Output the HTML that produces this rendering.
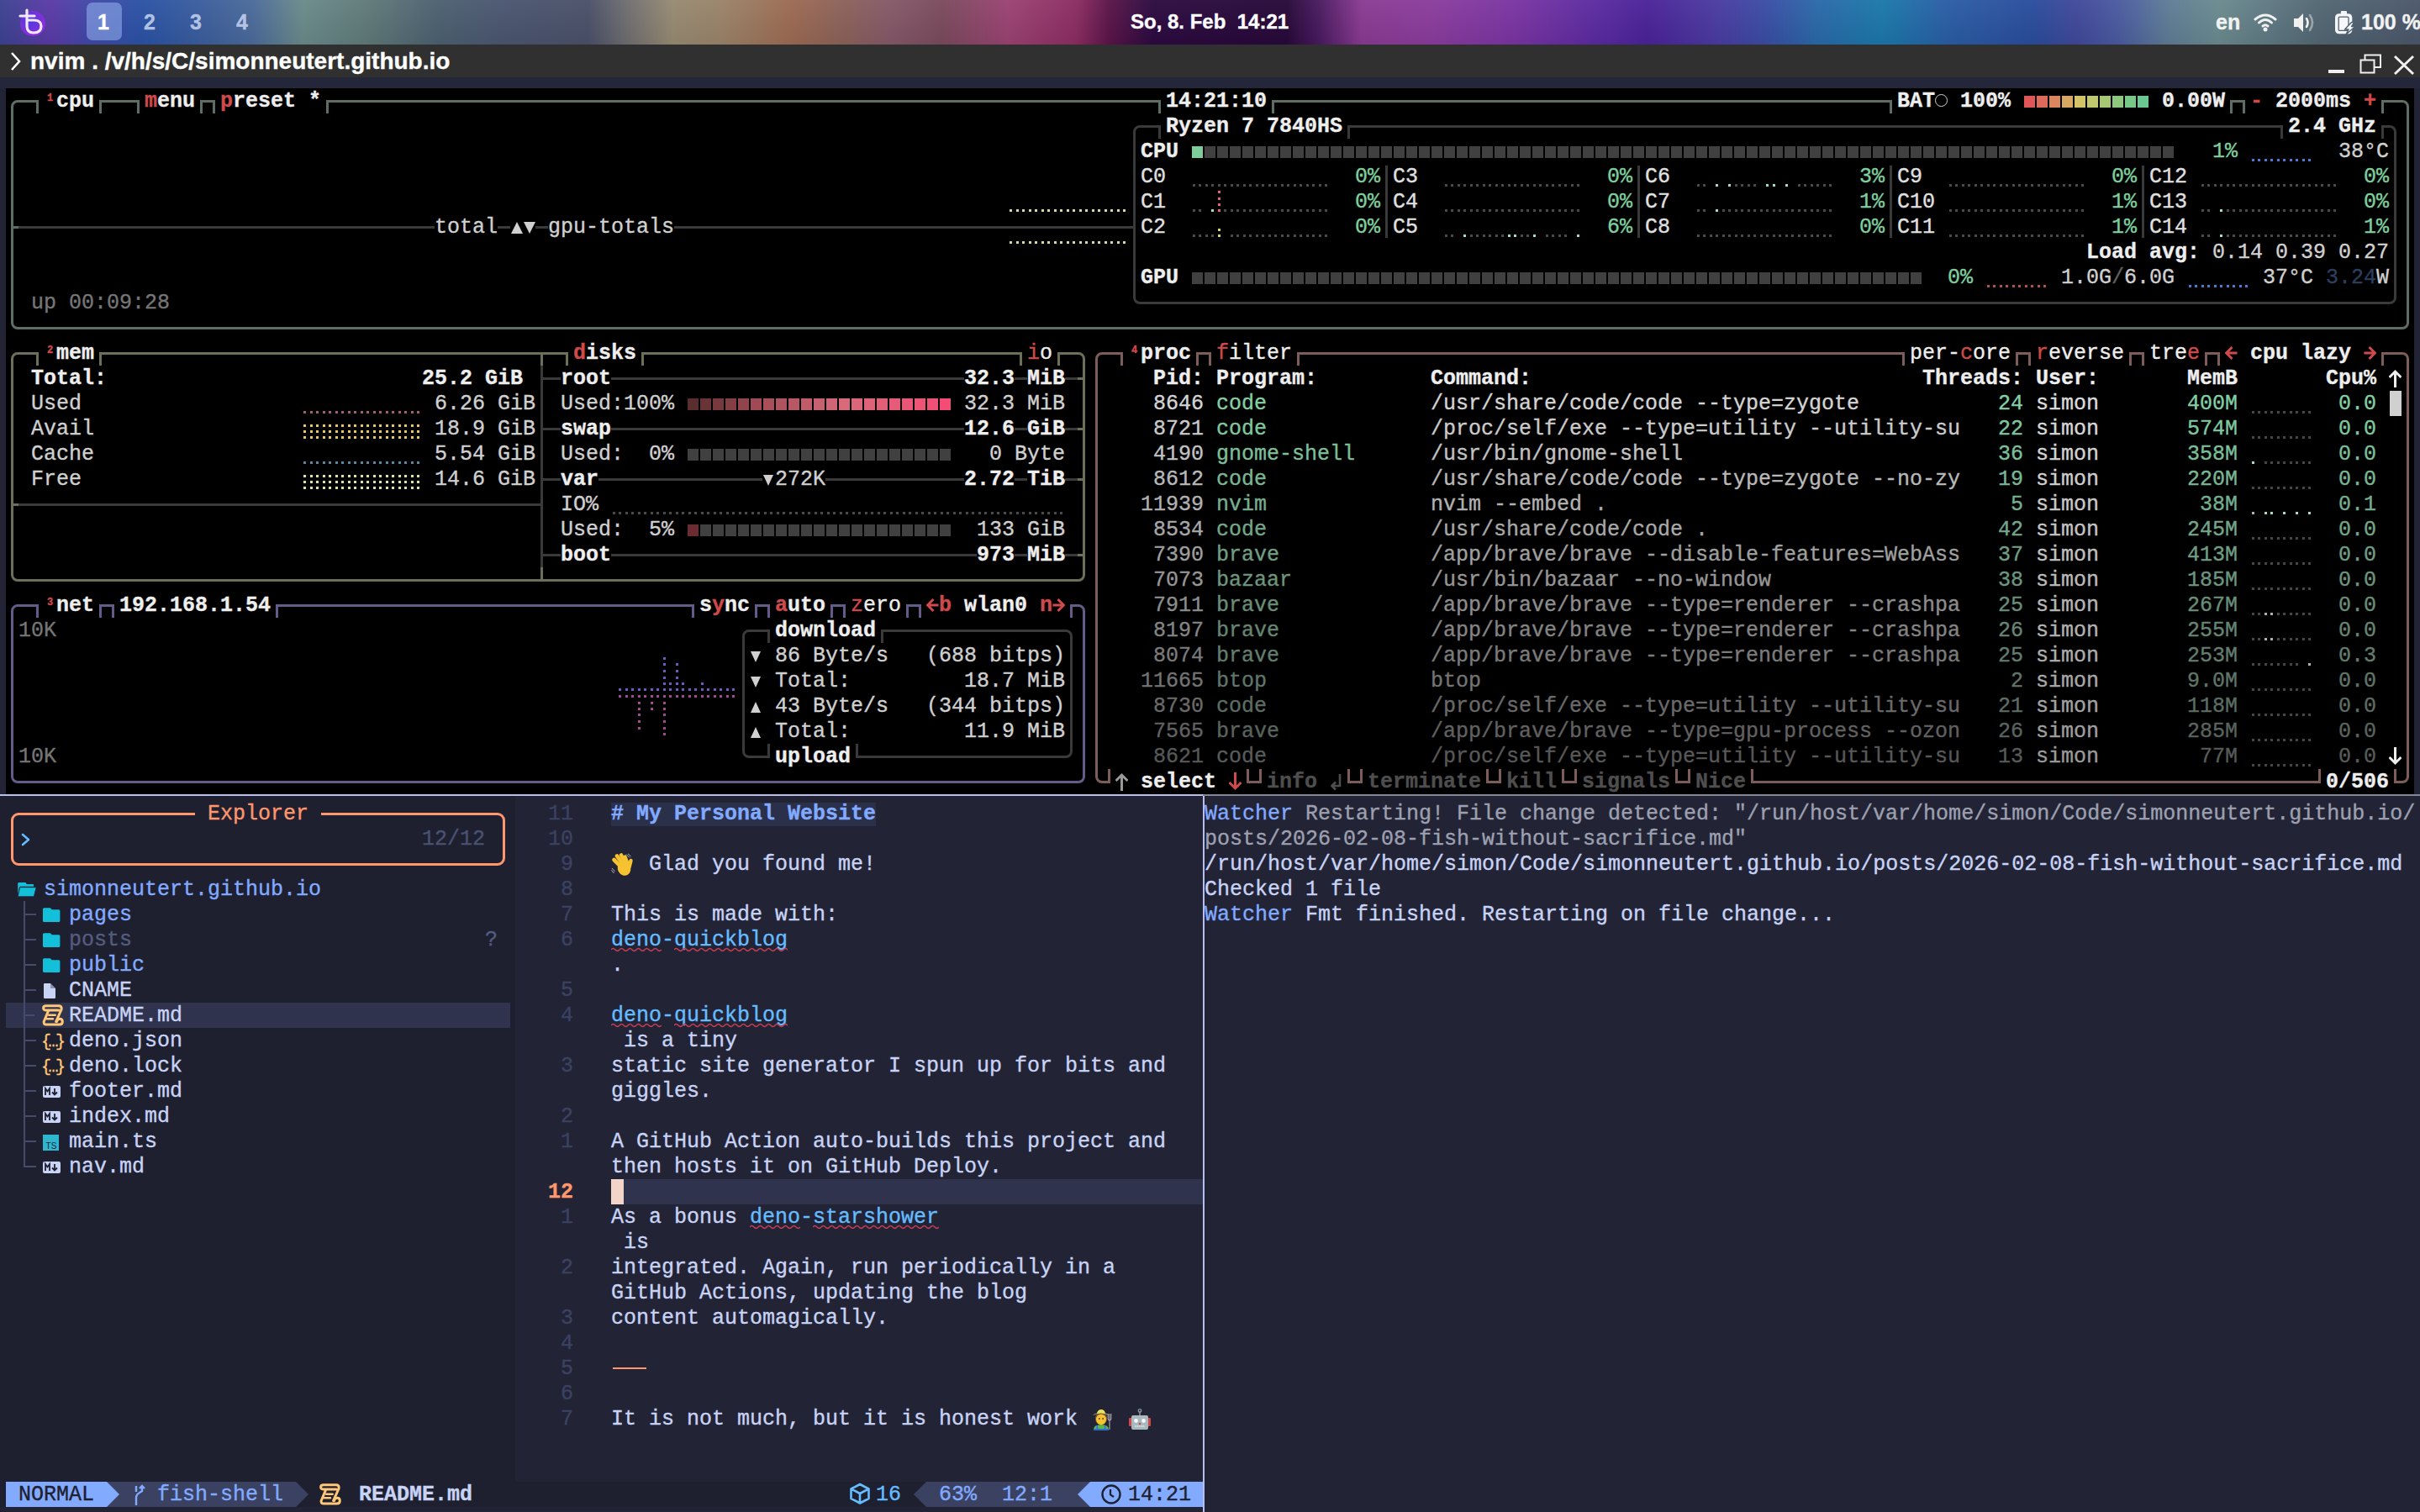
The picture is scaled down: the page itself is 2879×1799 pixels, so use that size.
<!DOCTYPE html><html><head><meta charset="utf-8"><style>

*{margin:0;padding:0}
html,body{width:2879px;height:1799px;overflow:hidden;background:#222436}
body{position:relative}
i,b{position:absolute;display:block}
i{font-style:normal;white-space:pre;-webkit-text-stroke:0.35px;font-family:"Liberation Mono",monospace;font-size:25px;line-height:30px;font-weight:normal}

</style></head><body>
<b style="left:0;top:0;width:2879px;height:53px;background:linear-gradient(90deg,#3b4290 0px,#5a3aa6 60px,#3f48a8 110px,#2a52a4 170px,#3d5f9c 250px,#4a6a9a 300px,#6a8a8a 360px,#5f7878 440px,#4c6070 520px,#4a5570 600px,#4a5068 700px,#6a6a70 740px,#968a72 800px,#9a8268 860px,#9c6a52 940px,#8c6258 1000px,#845868 1060px,#7a4a5c 1120px,#9a4272 1200px,#8c2c62 1280px,#5a1448 1320px,#2c0a40 1370px,#260838 1530px,#4a1a60 1570px,#8a3a92 1620px,#8a3c9c 1700px,#7a34a2 1800px,#5a2aa0 1900px,#4a2298 1960px,#4a3aa0 2040px,#3a4ca4 2100px,#2a68a8 2160px,#1a78aa 2240px,#2a5ca4 2320px,#2a4c9c 2420px,#40489a 2470px,#4a5aa0 2520px,#5e7c96 2580px,#6a8a8e 2640px,#5e7882 2700px,#526672 2760px,#4a566a 2879px)"></b>
<b style="left:0;top:0;width:2879px;height:53px;background:linear-gradient(180deg,rgba(255,255,255,0.04),rgba(0,0,0,0.06))"></b>
<b style="left:0;top:53px;width:2879px;height:39px;background:#303030"></b>
<b style="left:0;top:92px;width:2879px;height:13px;background:#24273a"></b>
<b style="left:7px;top:105px;width:2865px;height:840px;background:#000000"></b>
<b style="left:13px;top:119px;width:2853px;height:273px;border:3px solid #5f6e64;border-radius:8px;box-sizing:border-box"></b>
<b style="left:46px;top:118px;width:72px;height:5px;background:#000"></b>
<b style="left:43px;top:119px;width:3px;height:16px;background:#5f6e64"></b>
<b style="left:118px;top:119px;width:3px;height:16px;background:#5f6e64"></b>
<b style="left:166px;top:118px;width:72px;height:5px;background:#000"></b>
<b style="left:163px;top:119px;width:3px;height:16px;background:#5f6e64"></b>
<b style="left:238px;top:119px;width:3px;height:16px;background:#5f6e64"></b>
<b style="left:256px;top:118px;width:132px;height:5px;background:#000"></b>
<b style="left:253px;top:119px;width:3px;height:16px;background:#5f6e64"></b>
<b style="left:388px;top:119px;width:3px;height:16px;background:#5f6e64"></b>
<b style="left:1381px;top:118px;width:132px;height:5px;background:#000"></b>
<b style="left:1378px;top:119px;width:3px;height:16px;background:#5f6e64"></b>
<b style="left:1513px;top:119px;width:3px;height:16px;background:#5f6e64"></b>
<b style="left:2251px;top:118px;width:402px;height:5px;background:#000"></b>
<b style="left:2248px;top:119px;width:3px;height:16px;background:#5f6e64"></b>
<b style="left:2653px;top:119px;width:3px;height:16px;background:#5f6e64"></b>
<b style="left:2671px;top:118px;width:162px;height:5px;background:#000"></b>
<b style="left:2668px;top:119px;width:3px;height:16px;background:#5f6e64"></b>
<b style="left:2833px;top:119px;width:3px;height:16px;background:#5f6e64"></b>
<i style="left:56px;top:111px;color:#d04a4a;font-weight:bold;font-size:12px;line-height:12px">1</i>
<i style="left:67px;top:106px;color:#eeeeee;font-weight:bold">cpu</i>
<i style="left:172px;top:106px;color:#d04a4a;font-weight:bold">m</i>
<i style="left:187px;top:106px;color:#eeeeee;font-weight:bold">enu</i>
<i style="left:262px;top:106px;color:#d04a4a;font-weight:bold">p</i>
<i style="left:277px;top:106px;color:#eeeeee;font-weight:bold">reset</i>
<i style="left:367px;top:106px;color:#eeeeee;font-weight:bold">*</i>
<i style="left:1387px;top:106px;color:#eeeeee;font-weight:bold">14:21:10</i>
<i style="left:2257px;top:106px;color:#eeeeee;font-weight:bold">BAT</i>
<b style="left:2302px;top:112px;width:15px;height:15px;border:1.6px solid #d0d0d0;border-radius:50%;box-sizing:border-box"></b>
<i style="left:2332px;top:106px;color:#eeeeee;font-weight:bold">100%</i>
<b style="left:2408px;top:114px;width:13px;height:14px;background:#e05555"></b>
<b style="left:2423px;top:114px;width:13px;height:14px;background:#e06a5a"></b>
<b style="left:2438px;top:114px;width:13px;height:14px;background:#dc8660"></b>
<b style="left:2453px;top:114px;width:13px;height:14px;background:#d8a862"></b>
<b style="left:2468px;top:114px;width:13px;height:14px;background:#d2c466"></b>
<b style="left:2483px;top:114px;width:13px;height:14px;background:#bfc86c"></b>
<b style="left:2498px;top:114px;width:13px;height:14px;background:#a6c874"></b>
<b style="left:2513px;top:114px;width:13px;height:14px;background:#8ec87e"></b>
<b style="left:2528px;top:114px;width:13px;height:14px;background:#78c888"></b>
<b style="left:2543px;top:114px;width:13px;height:14px;background:#6ac992"></b>
<i style="left:2572px;top:106px;color:#eeeeee;font-weight:bold">0.00W</i>
<i style="left:2677px;top:106px;color:#d04a4a;font-weight:bold">-</i>
<i style="left:2707px;top:106px;color:#eeeeee;font-weight:bold">2000ms</i>
<i style="left:2812px;top:106px;color:#d04a4a;font-weight:bold">+</i>
<b style="left:13px;top:269px;width:1338px;height:3px;background:#3a3a3a"></b>
<b style="left:13px;top:269px;width:9px;height:3px;background:#5f6e64"></b>
<b style="left:517px;top:257px;width:75px;height:26px;background:#000000"></b>
<b style="left:607px;top:257px;width:30px;height:26px;background:#000000"></b>
<b style="left:652px;top:257px;width:150px;height:26px;background:#000000"></b>
<i style="left:517px;top:256px;color:#d0d0d0">total</i>
<i style="left:652px;top:256px;color:#d0d0d0">gpu-totals</i>
<b style="left:608px;top:264px;width:0;height:0;border-left:7px solid transparent;border-right:7px solid transparent;border-bottom:14px solid #d0d0d0"></b>
<b style="left:623px;top:264px;width:0;height:0;border-left:7px solid transparent;border-right:7px solid transparent;border-top:14px solid #d0d0d0"></b>
<b style="left:1207px;top:249px;width:135px;height:3px;background:repeating-linear-gradient(90deg,transparent 0 2px,#d8d8a0 2px 5px,transparent 5px 9px,#d8d8a0 9px 12px,transparent 12px 15px)"></b>
<b style="left:1201px;top:249px;width:3px;height:3px;background:#d8d8a0"></b>
<b style="left:1207px;top:287px;width:135px;height:3px;background:repeating-linear-gradient(90deg,transparent 0 2px,#d8d8a0 2px 5px,transparent 5px 9px,#d8d8a0 9px 12px,transparent 12px 15px)"></b>
<b style="left:1201px;top:287px;width:3px;height:3px;background:#d8d8a0"></b>
<i style="left:37px;top:346px;color:#767676">up 00:09:28</i>
<b style="left:1348px;top:149px;width:1503px;height:213px;border:3px solid #3a3a3a;border-radius:8px;box-sizing:border-box"></b>
<b style="left:1381px;top:148px;width:222px;height:5px;background:#000"></b>
<b style="left:1378px;top:149px;width:3px;height:16px;background:#3a3a3a"></b>
<b style="left:1603px;top:149px;width:3px;height:16px;background:#3a3a3a"></b>
<b style="left:2716px;top:148px;width:117px;height:5px;background:#000"></b>
<b style="left:2713px;top:149px;width:3px;height:16px;background:#3a3a3a"></b>
<b style="left:2833px;top:149px;width:3px;height:16px;background:#3a3a3a"></b>
<i style="left:1387px;top:136px;color:#eeeeee;font-weight:bold">Ryzen 7 7840HS</i>
<i style="left:2722px;top:136px;color:#eeeeee;font-weight:bold">2.4 GHz</i>
<i style="left:1357px;top:166px;color:#eeeeee;font-weight:bold">CPU</i>
<b style="left:1418px;top:174px;width:13px;height:14px;background:#7ccc9c"></b>
<b style="left:1432px;top:174px;width:1155px;height:14px;background:repeating-linear-gradient(90deg,transparent 0 1px,#404040 1px 14px,transparent 14px 15px)"></b>
<i style="left:2632px;top:166px;color:#7fcf9f">1%</i>
<b style="left:2677px;top:189px;width:75px;height:3px;background:repeating-linear-gradient(90deg,transparent 0 2px,#5078d8 2px 5px,transparent 5px 9px,#5078d8 9px 12px,transparent 12px 15px)"></b>
<i style="left:2782px;top:166px;color:#d0d0d0">38°C</i>
<i style="left:1357px;top:196px;color:#e0e0e0">C0</i>
<b style="left:1417px;top:219px;width:165px;height:3px;background:repeating-linear-gradient(90deg,transparent 0 2px,#4a4a4a 2px 5px,transparent 5px 9px,#4a4a4a 9px 12px,transparent 12px 15px)"></b>
<i style="left:1612px;top:196px;color:#7fcf9f">0%</i>
<i style="left:1357px;top:226px;color:#e0e0e0">C1</i>
<b style="left:1419px;top:249px;width:3px;height:3px;background:#4a4a4a"></b>
<b style="left:1426px;top:249px;width:3px;height:3px;background:#4a4a4a"></b>
<b style="left:1441px;top:249px;width:3px;height:3px;background:#a6dcc2"></b>
<b style="left:1449px;top:227px;width:3px;height:3px;background:#e06080"></b>
<b style="left:1449px;top:234.5px;width:3px;height:3px;background:#e06080"></b>
<b style="left:1449px;top:242px;width:3px;height:3px;background:#e06080"></b>
<b style="left:1449px;top:249px;width:3px;height:3px;background:#e06080"></b>
<b style="left:1456px;top:249px;width:3px;height:3px;background:#4a4a4a"></b>
<b style="left:1464px;top:249px;width:3px;height:3px;background:#4a4a4a"></b>
<b style="left:1471px;top:249px;width:3px;height:3px;background:#4a4a4a"></b>
<b style="left:1479px;top:249px;width:3px;height:3px;background:#4a4a4a"></b>
<b style="left:1486px;top:249px;width:3px;height:3px;background:#4a4a4a"></b>
<b style="left:1494px;top:249px;width:3px;height:3px;background:#4a4a4a"></b>
<b style="left:1501px;top:249px;width:3px;height:3px;background:#4a4a4a"></b>
<b style="left:1509px;top:249px;width:3px;height:3px;background:#4a4a4a"></b>
<b style="left:1516px;top:249px;width:3px;height:3px;background:#4a4a4a"></b>
<b style="left:1524px;top:249px;width:3px;height:3px;background:#4a4a4a"></b>
<b style="left:1531px;top:249px;width:3px;height:3px;background:#4a4a4a"></b>
<b style="left:1539px;top:249px;width:3px;height:3px;background:#4a4a4a"></b>
<b style="left:1546px;top:249px;width:3px;height:3px;background:#4a4a4a"></b>
<b style="left:1554px;top:249px;width:3px;height:3px;background:#4a4a4a"></b>
<b style="left:1561px;top:249px;width:3px;height:3px;background:#4a4a4a"></b>
<b style="left:1569px;top:249px;width:3px;height:3px;background:#4a4a4a"></b>
<b style="left:1576px;top:249px;width:3px;height:3px;background:#4a4a4a"></b>
<i style="left:1612px;top:226px;color:#7fcf9f">0%</i>
<i style="left:1357px;top:256px;color:#e0e0e0">C2</i>
<b style="left:1419px;top:279px;width:3px;height:3px;background:#4a4a4a"></b>
<b style="left:1426px;top:279px;width:3px;height:3px;background:#4a4a4a"></b>
<b style="left:1434px;top:279px;width:3px;height:3px;background:#4a4a4a"></b>
<b style="left:1441px;top:279px;width:3px;height:3px;background:#4a4a4a"></b>
<b style="left:1449px;top:272px;width:3px;height:3px;background:#d8d870"></b>
<b style="left:1449px;top:279px;width:3px;height:3px;background:#d8d870"></b>
<b style="left:1464px;top:279px;width:3px;height:3px;background:#4a4a4a"></b>
<b style="left:1471px;top:279px;width:3px;height:3px;background:#4a4a4a"></b>
<b style="left:1479px;top:279px;width:3px;height:3px;background:#4a4a4a"></b>
<b style="left:1486px;top:279px;width:3px;height:3px;background:#4a4a4a"></b>
<b style="left:1494px;top:279px;width:3px;height:3px;background:#4a4a4a"></b>
<b style="left:1501px;top:279px;width:3px;height:3px;background:#4a4a4a"></b>
<b style="left:1509px;top:279px;width:3px;height:3px;background:#4a4a4a"></b>
<b style="left:1516px;top:279px;width:3px;height:3px;background:#4a4a4a"></b>
<b style="left:1524px;top:279px;width:3px;height:3px;background:#4a4a4a"></b>
<b style="left:1531px;top:279px;width:3px;height:3px;background:#4a4a4a"></b>
<b style="left:1539px;top:279px;width:3px;height:3px;background:#4a4a4a"></b>
<b style="left:1546px;top:279px;width:3px;height:3px;background:#4a4a4a"></b>
<b style="left:1554px;top:279px;width:3px;height:3px;background:#4a4a4a"></b>
<b style="left:1561px;top:279px;width:3px;height:3px;background:#4a4a4a"></b>
<b style="left:1569px;top:279px;width:3px;height:3px;background:#4a4a4a"></b>
<b style="left:1576px;top:279px;width:3px;height:3px;background:#4a4a4a"></b>
<i style="left:1612px;top:256px;color:#7fcf9f">0%</i>
<b style="left:1648px;top:197px;width:3px;height:86px;background:#3a3a3a"></b>
<i style="left:1657px;top:196px;color:#e0e0e0">C3</i>
<b style="left:1717px;top:219px;width:165px;height:3px;background:repeating-linear-gradient(90deg,transparent 0 2px,#4a4a4a 2px 5px,transparent 5px 9px,#4a4a4a 9px 12px,transparent 12px 15px)"></b>
<i style="left:1912px;top:196px;color:#7fcf9f">0%</i>
<i style="left:1657px;top:226px;color:#e0e0e0">C4</i>
<b style="left:1717px;top:249px;width:165px;height:3px;background:repeating-linear-gradient(90deg,transparent 0 2px,#4a4a4a 2px 5px,transparent 5px 9px,#4a4a4a 9px 12px,transparent 12px 15px)"></b>
<i style="left:1912px;top:226px;color:#7fcf9f">0%</i>
<i style="left:1657px;top:256px;color:#e0e0e0">C5</i>
<b style="left:1719px;top:279px;width:3px;height:3px;background:#4a4a4a"></b>
<b style="left:1726px;top:279px;width:3px;height:3px;background:#4a4a4a"></b>
<b style="left:1741px;top:279px;width:3px;height:3px;background:#a6dcc2"></b>
<b style="left:1749px;top:279px;width:3px;height:3px;background:#4a4a4a"></b>
<b style="left:1756px;top:279px;width:3px;height:3px;background:#4a4a4a"></b>
<b style="left:1764px;top:279px;width:3px;height:3px;background:#4a4a4a"></b>
<b style="left:1771px;top:279px;width:3px;height:3px;background:#4a4a4a"></b>
<b style="left:1779px;top:279px;width:3px;height:3px;background:#4a4a4a"></b>
<b style="left:1786px;top:279px;width:3px;height:3px;background:#4a4a4a"></b>
<b style="left:1794px;top:279px;width:3px;height:3px;background:#a6dcc2"></b>
<b style="left:1801px;top:279px;width:3px;height:3px;background:#a6dcc2"></b>
<b style="left:1809px;top:279px;width:3px;height:3px;background:#4a4a4a"></b>
<b style="left:1816px;top:279px;width:3px;height:3px;background:#4a4a4a"></b>
<b style="left:1824px;top:279px;width:3px;height:3px;background:#a6dcc2"></b>
<b style="left:1839px;top:279px;width:3px;height:3px;background:#4a4a4a"></b>
<b style="left:1846px;top:279px;width:3px;height:3px;background:#4a4a4a"></b>
<b style="left:1854px;top:279px;width:3px;height:3px;background:#4a4a4a"></b>
<b style="left:1861px;top:279px;width:3px;height:3px;background:#4a4a4a"></b>
<b style="left:1876px;top:279px;width:3px;height:3px;background:#a6dcc2"></b>
<i style="left:1912px;top:256px;color:#7fcf9f">6%</i>
<b style="left:1948px;top:197px;width:3px;height:86px;background:#3a3a3a"></b>
<i style="left:1957px;top:196px;color:#e0e0e0">C6</i>
<b style="left:2019px;top:219px;width:3px;height:3px;background:#4a4a4a"></b>
<b style="left:2026px;top:219px;width:3px;height:3px;background:#4a4a4a"></b>
<b style="left:2041px;top:219px;width:3px;height:3px;background:#a6dcc2"></b>
<b style="left:2056px;top:219px;width:3px;height:3px;background:#a6dcc2"></b>
<b style="left:2064px;top:219px;width:3px;height:3px;background:#4a4a4a"></b>
<b style="left:2071px;top:219px;width:3px;height:3px;background:#4a4a4a"></b>
<b style="left:2079px;top:219px;width:3px;height:3px;background:#4a4a4a"></b>
<b style="left:2086px;top:219px;width:3px;height:3px;background:#4a4a4a"></b>
<b style="left:2101px;top:219px;width:3px;height:3px;background:#a6dcc2"></b>
<b style="left:2109px;top:219px;width:3px;height:3px;background:#a6dcc2"></b>
<b style="left:2124px;top:219px;width:3px;height:3px;background:#a6dcc2"></b>
<b style="left:2139px;top:219px;width:3px;height:3px;background:#4a4a4a"></b>
<b style="left:2146px;top:219px;width:3px;height:3px;background:#4a4a4a"></b>
<b style="left:2154px;top:219px;width:3px;height:3px;background:#4a4a4a"></b>
<b style="left:2161px;top:219px;width:3px;height:3px;background:#4a4a4a"></b>
<b style="left:2169px;top:219px;width:3px;height:3px;background:#4a4a4a"></b>
<b style="left:2176px;top:219px;width:3px;height:3px;background:#4a4a4a"></b>
<i style="left:2212px;top:196px;color:#7fcf9f">3%</i>
<i style="left:1957px;top:226px;color:#e0e0e0">C7</i>
<b style="left:2019px;top:249px;width:3px;height:3px;background:#4a4a4a"></b>
<b style="left:2026px;top:249px;width:3px;height:3px;background:#4a4a4a"></b>
<b style="left:2041px;top:249px;width:3px;height:3px;background:#a6dcc2"></b>
<b style="left:2049px;top:249px;width:3px;height:3px;background:#4a4a4a"></b>
<b style="left:2056px;top:249px;width:3px;height:3px;background:#4a4a4a"></b>
<b style="left:2064px;top:249px;width:3px;height:3px;background:#4a4a4a"></b>
<b style="left:2071px;top:249px;width:3px;height:3px;background:#4a4a4a"></b>
<b style="left:2079px;top:249px;width:3px;height:3px;background:#4a4a4a"></b>
<b style="left:2086px;top:249px;width:3px;height:3px;background:#4a4a4a"></b>
<b style="left:2094px;top:249px;width:3px;height:3px;background:#4a4a4a"></b>
<b style="left:2101px;top:249px;width:3px;height:3px;background:#4a4a4a"></b>
<b style="left:2109px;top:249px;width:3px;height:3px;background:#4a4a4a"></b>
<b style="left:2116px;top:249px;width:3px;height:3px;background:#4a4a4a"></b>
<b style="left:2124px;top:249px;width:3px;height:3px;background:#4a4a4a"></b>
<b style="left:2131px;top:249px;width:3px;height:3px;background:#4a4a4a"></b>
<b style="left:2139px;top:249px;width:3px;height:3px;background:#4a4a4a"></b>
<b style="left:2146px;top:249px;width:3px;height:3px;background:#4a4a4a"></b>
<b style="left:2154px;top:249px;width:3px;height:3px;background:#4a4a4a"></b>
<b style="left:2161px;top:249px;width:3px;height:3px;background:#4a4a4a"></b>
<b style="left:2169px;top:249px;width:3px;height:3px;background:#4a4a4a"></b>
<b style="left:2176px;top:249px;width:3px;height:3px;background:#4a4a4a"></b>
<i style="left:2212px;top:226px;color:#7fcf9f">1%</i>
<i style="left:1957px;top:256px;color:#e0e0e0">C8</i>
<b style="left:2017px;top:279px;width:165px;height:3px;background:repeating-linear-gradient(90deg,transparent 0 2px,#4a4a4a 2px 5px,transparent 5px 9px,#4a4a4a 9px 12px,transparent 12px 15px)"></b>
<i style="left:2212px;top:256px;color:#7fcf9f">0%</i>
<b style="left:2248px;top:197px;width:3px;height:86px;background:#3a3a3a"></b>
<i style="left:2257px;top:196px;color:#e0e0e0">C9</i>
<b style="left:2317px;top:219px;width:165px;height:3px;background:repeating-linear-gradient(90deg,transparent 0 2px,#4a4a4a 2px 5px,transparent 5px 9px,#4a4a4a 9px 12px,transparent 12px 15px)"></b>
<i style="left:2512px;top:196px;color:#7fcf9f">0%</i>
<i style="left:2257px;top:226px;color:#e0e0e0">C10</i>
<b style="left:2317px;top:249px;width:165px;height:3px;background:repeating-linear-gradient(90deg,transparent 0 2px,#4a4a4a 2px 5px,transparent 5px 9px,#4a4a4a 9px 12px,transparent 12px 15px)"></b>
<i style="left:2512px;top:226px;color:#7fcf9f">1%</i>
<i style="left:2257px;top:256px;color:#e0e0e0">C11</i>
<b style="left:2317px;top:279px;width:165px;height:3px;background:repeating-linear-gradient(90deg,transparent 0 2px,#4a4a4a 2px 5px,transparent 5px 9px,#4a4a4a 9px 12px,transparent 12px 15px)"></b>
<i style="left:2512px;top:256px;color:#7fcf9f">1%</i>
<b style="left:2548px;top:197px;width:3px;height:86px;background:#3a3a3a"></b>
<i style="left:2557px;top:196px;color:#e0e0e0">C12</i>
<b style="left:2617px;top:219px;width:165px;height:3px;background:repeating-linear-gradient(90deg,transparent 0 2px,#4a4a4a 2px 5px,transparent 5px 9px,#4a4a4a 9px 12px,transparent 12px 15px)"></b>
<i style="left:2812px;top:196px;color:#7fcf9f">0%</i>
<i style="left:2557px;top:226px;color:#e0e0e0">C13</i>
<b style="left:2619px;top:249px;width:3px;height:3px;background:#4a4a4a"></b>
<b style="left:2626px;top:249px;width:3px;height:3px;background:#4a4a4a"></b>
<b style="left:2641px;top:249px;width:3px;height:3px;background:#a6dcc2"></b>
<b style="left:2649px;top:249px;width:3px;height:3px;background:#4a4a4a"></b>
<b style="left:2656px;top:249px;width:3px;height:3px;background:#4a4a4a"></b>
<b style="left:2664px;top:249px;width:3px;height:3px;background:#4a4a4a"></b>
<b style="left:2671px;top:249px;width:3px;height:3px;background:#4a4a4a"></b>
<b style="left:2679px;top:249px;width:3px;height:3px;background:#4a4a4a"></b>
<b style="left:2686px;top:249px;width:3px;height:3px;background:#4a4a4a"></b>
<b style="left:2694px;top:249px;width:3px;height:3px;background:#4a4a4a"></b>
<b style="left:2701px;top:249px;width:3px;height:3px;background:#4a4a4a"></b>
<b style="left:2709px;top:249px;width:3px;height:3px;background:#4a4a4a"></b>
<b style="left:2716px;top:249px;width:3px;height:3px;background:#4a4a4a"></b>
<b style="left:2724px;top:249px;width:3px;height:3px;background:#4a4a4a"></b>
<b style="left:2731px;top:249px;width:3px;height:3px;background:#4a4a4a"></b>
<b style="left:2739px;top:249px;width:3px;height:3px;background:#4a4a4a"></b>
<b style="left:2746px;top:249px;width:3px;height:3px;background:#4a4a4a"></b>
<b style="left:2754px;top:249px;width:3px;height:3px;background:#4a4a4a"></b>
<b style="left:2761px;top:249px;width:3px;height:3px;background:#4a4a4a"></b>
<b style="left:2769px;top:249px;width:3px;height:3px;background:#4a4a4a"></b>
<b style="left:2776px;top:249px;width:3px;height:3px;background:#4a4a4a"></b>
<i style="left:2812px;top:226px;color:#7fcf9f">0%</i>
<i style="left:2557px;top:256px;color:#e0e0e0">C14</i>
<b style="left:2619px;top:279px;width:3px;height:3px;background:#4a4a4a"></b>
<b style="left:2626px;top:279px;width:3px;height:3px;background:#4a4a4a"></b>
<b style="left:2641px;top:279px;width:3px;height:3px;background:#a6dcc2"></b>
<b style="left:2649px;top:279px;width:3px;height:3px;background:#4a4a4a"></b>
<b style="left:2656px;top:279px;width:3px;height:3px;background:#4a4a4a"></b>
<b style="left:2664px;top:279px;width:3px;height:3px;background:#4a4a4a"></b>
<b style="left:2671px;top:279px;width:3px;height:3px;background:#4a4a4a"></b>
<b style="left:2679px;top:279px;width:3px;height:3px;background:#4a4a4a"></b>
<b style="left:2686px;top:279px;width:3px;height:3px;background:#4a4a4a"></b>
<b style="left:2694px;top:279px;width:3px;height:3px;background:#4a4a4a"></b>
<b style="left:2701px;top:279px;width:3px;height:3px;background:#4a4a4a"></b>
<b style="left:2709px;top:279px;width:3px;height:3px;background:#4a4a4a"></b>
<b style="left:2716px;top:279px;width:3px;height:3px;background:#4a4a4a"></b>
<b style="left:2724px;top:279px;width:3px;height:3px;background:#4a4a4a"></b>
<b style="left:2731px;top:279px;width:3px;height:3px;background:#4a4a4a"></b>
<b style="left:2739px;top:279px;width:3px;height:3px;background:#4a4a4a"></b>
<b style="left:2746px;top:279px;width:3px;height:3px;background:#4a4a4a"></b>
<b style="left:2754px;top:279px;width:3px;height:3px;background:#4a4a4a"></b>
<b style="left:2761px;top:279px;width:3px;height:3px;background:#4a4a4a"></b>
<b style="left:2769px;top:279px;width:3px;height:3px;background:#4a4a4a"></b>
<b style="left:2776px;top:279px;width:3px;height:3px;background:#4a4a4a"></b>
<i style="left:2812px;top:256px;color:#7fcf9f">1%</i>
<i style="left:2482px;top:286px;color:#eeeeee;font-weight:bold">Load avg:</i>
<i style="left:2617px;top:286px;color:#d0d0d0"> 0.14 0.39 0.27</i>
<i style="left:1357px;top:316px;color:#eeeeee;font-weight:bold">GPU</i>
<b style="left:1417px;top:324px;width:870px;height:14px;background:repeating-linear-gradient(90deg,transparent 0 1px,#404040 1px 14px,transparent 14px 15px)"></b>
<i style="left:2317px;top:316px;color:#7fcf9f">0%</i>
<b style="left:2362px;top:339px;width:75px;height:3px;background:repeating-linear-gradient(90deg,transparent 0 2px,#b05050 2px 5px,transparent 5px 9px,#b05050 9px 12px,transparent 12px 15px)"></b>
<i style="left:2452px;top:316px;color:#d0d0d0">1.0G</i>
<i style="left:2512px;top:316px;color:#606060">/</i>
<i style="left:2527px;top:316px;color:#d0d0d0">6.0G</i>
<b style="left:2602px;top:339px;width:75px;height:3px;background:repeating-linear-gradient(90deg,transparent 0 2px,#5078d8 2px 5px,transparent 5px 9px,#5078d8 9px 12px,transparent 12px 15px)"></b>
<i style="left:2692px;top:316px;color:#d0d0d0">37°C</i>
<i style="left:2767px;top:316px;color:#2c3e5c">3.24</i>
<i style="left:2827px;top:316px;color:#d0d0d0">W</i>
<b style="left:13px;top:419px;width:1278px;height:273px;border:3px solid #6c7058;border-radius:8px;box-sizing:border-box"></b>
<b style="left:46px;top:418px;width:72px;height:5px;background:#000"></b>
<b style="left:43px;top:419px;width:3px;height:16px;background:#6c7058"></b>
<b style="left:118px;top:419px;width:3px;height:16px;background:#6c7058"></b>
<b style="left:676px;top:418px;width:87px;height:5px;background:#000"></b>
<b style="left:673px;top:419px;width:3px;height:16px;background:#6c7058"></b>
<b style="left:763px;top:419px;width:3px;height:16px;background:#6c7058"></b>
<b style="left:1216px;top:418px;width:42px;height:5px;background:#000"></b>
<b style="left:1213px;top:419px;width:3px;height:16px;background:#6c7058"></b>
<b style="left:1258px;top:419px;width:3px;height:16px;background:#6c7058"></b>
<i style="left:56px;top:411px;color:#d04a4a;font-weight:bold;font-size:12px;line-height:12px">2</i>
<i style="left:67px;top:406px;color:#eeeeee;font-weight:bold">mem</i>
<i style="left:682px;top:406px;color:#d04a4a;font-weight:bold">d</i>
<i style="left:697px;top:406px;color:#eeeeee;font-weight:bold">isks</i>
<i style="left:1222px;top:406px;color:#d04a4a">i</i>
<i style="left:1237px;top:406px;color:#eeeeee">o</i>
<b style="left:643px;top:419px;width:3px;height:16px;background:#6c7058"></b>
<b style="left:643px;top:435px;width:3px;height:240px;background:#3a3a3a"></b>
<b style="left:643px;top:675px;width:3px;height:17px;background:#6c7058"></b>
<i style="left:37px;top:436px;color:#eeeeee;font-weight:bold">Total:</i>
<i style="left:502px;top:436px;color:#eeeeee;font-weight:bold">25.2 GiB</i>
<i style="left:37px;top:466px;color:#d0d0d0">Used</i>
<b style="left:367px;top:489px;width:135px;height:3px;background:repeating-linear-gradient(90deg,transparent 0 2px,#a25c7c 2px 5px,transparent 5px 9px,#a25c7c 9px 12px,transparent 12px 15px)"></b>
<b style="left:361px;top:489px;width:3px;height:3px;background:#a25c7c"></b>
<i style="left:517px;top:466px;color:#d0d0d0">6.26 GiB</i>
<i style="left:37px;top:496px;color:#d0d0d0">Avail</i>
<b style="left:367px;top:504.5px;width:135px;height:3px;background:repeating-linear-gradient(90deg,transparent 0 2px,#ecc462 2px 5px,transparent 5px 9px,#ecc462 9px 12px,transparent 12px 15px)"></b>
<b style="left:361px;top:504.5px;width:3px;height:3px;background:#ecc462"></b>
<b style="left:367px;top:512px;width:135px;height:3px;background:repeating-linear-gradient(90deg,transparent 0 2px,#ecc462 2px 5px,transparent 5px 9px,#ecc462 9px 12px,transparent 12px 15px)"></b>
<b style="left:361px;top:512px;width:3px;height:3px;background:#ecc462"></b>
<b style="left:367px;top:519px;width:135px;height:3px;background:repeating-linear-gradient(90deg,transparent 0 2px,#ecc462 2px 5px,transparent 5px 9px,#ecc462 9px 12px,transparent 12px 15px)"></b>
<b style="left:361px;top:519px;width:3px;height:3px;background:#ecc462"></b>
<i style="left:517px;top:496px;color:#d0d0d0">18.9 GiB</i>
<i style="left:37px;top:526px;color:#d0d0d0">Cache</i>
<b style="left:367px;top:549px;width:135px;height:3px;background:repeating-linear-gradient(90deg,transparent 0 2px,#5a86a6 2px 5px,transparent 5px 9px,#5a86a6 9px 12px,transparent 12px 15px)"></b>
<b style="left:361px;top:549px;width:3px;height:3px;background:#5a86a6"></b>
<i style="left:517px;top:526px;color:#d0d0d0">5.54 GiB</i>
<i style="left:37px;top:556px;color:#d0d0d0">Free</i>
<b style="left:367px;top:564.5px;width:135px;height:3px;background:repeating-linear-gradient(90deg,transparent 0 2px,#dce2a2 2px 5px,transparent 5px 9px,#dce2a2 9px 12px,transparent 12px 15px)"></b>
<b style="left:361px;top:564.5px;width:3px;height:3px;background:#dce2a2"></b>
<b style="left:367px;top:572px;width:135px;height:3px;background:repeating-linear-gradient(90deg,transparent 0 2px,#dce2a2 2px 5px,transparent 5px 9px,#dce2a2 9px 12px,transparent 12px 15px)"></b>
<b style="left:361px;top:572px;width:3px;height:3px;background:#dce2a2"></b>
<b style="left:367px;top:579px;width:135px;height:3px;background:repeating-linear-gradient(90deg,transparent 0 2px,#dce2a2 2px 5px,transparent 5px 9px,#dce2a2 9px 12px,transparent 12px 15px)"></b>
<b style="left:361px;top:579px;width:3px;height:3px;background:#dce2a2"></b>
<i style="left:517px;top:556px;color:#d0d0d0">14.6 GiB</i>
<b style="left:13px;top:599px;width:633px;height:3px;background:#3a3a3a"></b>
<b style="left:13px;top:599px;width:9px;height:3px;background:#6c7058"></b>
<b style="left:643px;top:449px;width:648px;height:3px;background:#3a3a3a"></b>
<b style="left:1282px;top:449px;width:9px;height:3px;background:#6c7058"></b>
<b style="left:643px;top:509px;width:648px;height:3px;background:#3a3a3a"></b>
<b style="left:1282px;top:509px;width:9px;height:3px;background:#6c7058"></b>
<b style="left:643px;top:569px;width:648px;height:3px;background:#3a3a3a"></b>
<b style="left:1282px;top:569px;width:9px;height:3px;background:#6c7058"></b>
<b style="left:643px;top:659px;width:648px;height:3px;background:#3a3a3a"></b>
<b style="left:1282px;top:659px;width:9px;height:3px;background:#6c7058"></b>
<b style="left:667px;top:437px;width:60px;height:26px;background:#000000"></b>
<i style="left:667px;top:436px;color:#eeeeee;font-weight:bold">root</i>
<b style="left:1147px;top:437px;width:60px;height:26px;background:#000000"></b>
<i style="left:1147px;top:436px;color:#eeeeee;font-weight:bold">32.3</i>
<b style="left:1222px;top:437px;width:45px;height:26px;background:#000000"></b>
<i style="left:1222px;top:436px;color:#eeeeee;font-weight:bold">MiB</i>
<i style="left:667px;top:466px;color:#d0d0d0">Used:100%</i>
<b style="left:818px;top:474px;width:13px;height:14px;background:#5a2e2e"></b>
<b style="left:833px;top:474px;width:13px;height:14px;background:#683436"></b>
<b style="left:848px;top:474px;width:13px;height:14px;background:#76393e"></b>
<b style="left:863px;top:474px;width:13px;height:14px;background:#843f45"></b>
<b style="left:878px;top:474px;width:13px;height:14px;background:#92444d"></b>
<b style="left:893px;top:474px;width:13px;height:14px;background:#a04a55"></b>
<b style="left:908px;top:474px;width:13px;height:14px;background:#a84f5a"></b>
<b style="left:923px;top:474px;width:13px;height:14px;background:#b05360"></b>
<b style="left:938px;top:474px;width:13px;height:14px;background:#b85865"></b>
<b style="left:953px;top:474px;width:13px;height:14px;background:#c05c6a"></b>
<b style="left:968px;top:474px;width:13px;height:14px;background:#c8616f"></b>
<b style="left:983px;top:474px;width:13px;height:14px;background:#d06575"></b>
<b style="left:998px;top:474px;width:13px;height:14px;background:#d86a7a"></b>
<b style="left:1013px;top:474px;width:13px;height:14px;background:#dc6679"></b>
<b style="left:1028px;top:474px;width:13px;height:14px;background:#df6278"></b>
<b style="left:1043px;top:474px;width:13px;height:14px;background:#e25f78"></b>
<b style="left:1058px;top:474px;width:13px;height:14px;background:#e65b77"></b>
<b style="left:1073px;top:474px;width:13px;height:14px;background:#ea5776"></b>
<b style="left:1088px;top:474px;width:13px;height:14px;background:#ed5476"></b>
<b style="left:1103px;top:474px;width:13px;height:14px;background:#f05075"></b>
<b style="left:1118px;top:474px;width:13px;height:14px;background:#f44c74"></b>
<i style="left:1147px;top:466px;color:#d0d0d0">32.3 MiB</i>
<b style="left:667px;top:497px;width:60px;height:26px;background:#000000"></b>
<i style="left:667px;top:496px;color:#eeeeee;font-weight:bold">swap</i>
<b style="left:1147px;top:497px;width:60px;height:26px;background:#000000"></b>
<i style="left:1147px;top:496px;color:#eeeeee;font-weight:bold">12.6</i>
<b style="left:1222px;top:497px;width:45px;height:26px;background:#000000"></b>
<i style="left:1222px;top:496px;color:#eeeeee;font-weight:bold">GiB</i>
<i style="left:667px;top:526px;color:#d0d0d0">Used:  0%</i>
<b style="left:817px;top:534px;width:315px;height:14px;background:repeating-linear-gradient(90deg,transparent 0 1px,#404040 1px 14px,transparent 14px 15px)"></b>
<i style="left:1177px;top:526px;color:#d0d0d0">0 Byte</i>
<b style="left:667px;top:557px;width:45px;height:26px;background:#000000"></b>
<i style="left:667px;top:556px;color:#eeeeee;font-weight:bold">var</i>
<b style="left:907px;top:557px;width:75px;height:26px;background:#000000"></b>
<b style="left:908px;top:565px;width:0;height:0;border-left:6.5px solid transparent;border-right:6.5px solid transparent;border-top:13px solid #d0d0d0"></b>
<i style="left:922px;top:556px;color:#d0d0d0">272K</i>
<b style="left:1147px;top:557px;width:60px;height:26px;background:#000000"></b>
<i style="left:1147px;top:556px;color:#eeeeee;font-weight:bold">2.72</i>
<b style="left:1222px;top:557px;width:45px;height:26px;background:#000000"></b>
<i style="left:1222px;top:556px;color:#eeeeee;font-weight:bold">TiB</i>
<i style="left:667px;top:586px;color:#d0d0d0">IO%</i>
<b style="left:727px;top:609px;width:540px;height:3px;background:repeating-linear-gradient(90deg,transparent 0 2px,#4a4a4a 2px 5px,transparent 5px 9px,#4a4a4a 9px 12px,transparent 12px 15px)"></b>
<i style="left:667px;top:616px;color:#d0d0d0">Used:  5%</i>
<b style="left:818px;top:624px;width:13px;height:14px;background:#6a2c30"></b>
<b style="left:832px;top:624px;width:300px;height:14px;background:repeating-linear-gradient(90deg,transparent 0 1px,#404040 1px 14px,transparent 14px 15px)"></b>
<i style="left:1162px;top:616px;color:#d0d0d0">133 GiB</i>
<b style="left:667px;top:647px;width:60px;height:26px;background:#000000"></b>
<i style="left:667px;top:646px;color:#eeeeee;font-weight:bold">boot</i>
<b style="left:1162px;top:647px;width:45px;height:26px;background:#000000"></b>
<i style="left:1162px;top:646px;color:#eeeeee;font-weight:bold">973</i>
<b style="left:1222px;top:647px;width:45px;height:26px;background:#000000"></b>
<i style="left:1222px;top:646px;color:#eeeeee;font-weight:bold">MiB</i>
<b style="left:13px;top:719px;width:1278px;height:213px;border:3px solid #655b8a;border-radius:8px;box-sizing:border-box"></b>
<b style="left:46px;top:718px;width:72px;height:5px;background:#000"></b>
<b style="left:43px;top:719px;width:3px;height:16px;background:#655b8a"></b>
<b style="left:118px;top:719px;width:3px;height:16px;background:#655b8a"></b>
<b style="left:136px;top:718px;width:192px;height:5px;background:#000"></b>
<b style="left:133px;top:719px;width:3px;height:16px;background:#655b8a"></b>
<b style="left:328px;top:719px;width:3px;height:16px;background:#655b8a"></b>
<b style="left:826px;top:718px;width:72px;height:5px;background:#000"></b>
<b style="left:823px;top:719px;width:3px;height:16px;background:#655b8a"></b>
<b style="left:898px;top:719px;width:3px;height:16px;background:#655b8a"></b>
<b style="left:916px;top:718px;width:72px;height:5px;background:#000"></b>
<b style="left:913px;top:719px;width:3px;height:16px;background:#655b8a"></b>
<b style="left:988px;top:719px;width:3px;height:16px;background:#655b8a"></b>
<b style="left:1006px;top:718px;width:72px;height:5px;background:#000"></b>
<b style="left:1003px;top:719px;width:3px;height:16px;background:#655b8a"></b>
<b style="left:1078px;top:719px;width:3px;height:16px;background:#655b8a"></b>
<b style="left:1096px;top:718px;width:177px;height:5px;background:#000"></b>
<b style="left:1093px;top:719px;width:3px;height:16px;background:#655b8a"></b>
<b style="left:1273px;top:719px;width:3px;height:16px;background:#655b8a"></b>
<i style="left:56px;top:711px;color:#d04a4a;font-weight:bold;font-size:12px;line-height:12px">3</i>
<i style="left:67px;top:706px;color:#eeeeee;font-weight:bold">net</i>
<i style="left:142px;top:706px;color:#eeeeee;font-weight:bold">192.168.1.54</i>
<i style="left:832px;top:706px;color:#eeeeee;font-weight:bold">s</i>
<i style="left:847px;top:706px;color:#d04a4a;font-weight:bold">y</i>
<i style="left:862px;top:706px;color:#eeeeee;font-weight:bold">nc</i>
<i style="left:922px;top:706px;color:#d04a4a;font-weight:bold">a</i>
<i style="left:937px;top:706px;color:#eeeeee;font-weight:bold">uto</i>
<i style="left:1012px;top:706px;color:#d04a4a">z</i>
<i style="left:1027px;top:706px;color:#eeeeee">ero</i>
<svg style="position:absolute;left:1102px;top:705px" width="15" height="30" viewBox="0 0 15 30"><path d="M1.5 15 L14.5 15 M8.5 8 L1.5 15 L8.5 22" fill="none" stroke="#d04a4a" stroke-width="3"/></svg>
<i style="left:1117px;top:706px;color:#d04a4a;font-weight:bold">b</i>
<i style="left:1147px;top:706px;color:#eeeeee;font-weight:bold">wlan0</i>
<i style="left:1237px;top:706px;color:#d04a4a;font-weight:bold">n</i>
<svg style="position:absolute;left:1252px;top:705px" width="15" height="30" viewBox="0 0 15 30"><path d="M0.5 15 L13.5 15 M6.5 8 L13.5 15 L6.5 22" fill="none" stroke="#d04a4a" stroke-width="3"/></svg>
<i style="left:22px;top:736px;color:#767676">10K</i>
<i style="left:22px;top:886px;color:#767676">10K</i>
<b style="left:883px;top:749px;width:393px;height:153px;border:3px solid #3a3a3a;border-radius:8px;box-sizing:border-box"></b>
<b style="left:916px;top:748px;width:132px;height:5px;background:#000"></b>
<b style="left:913px;top:749px;width:3px;height:16px;background:#3a3a3a"></b>
<b style="left:1048px;top:749px;width:3px;height:16px;background:#3a3a3a"></b>
<b style="left:916px;top:898px;width:102px;height:5px;background:#000"></b>
<b style="left:913px;top:885px;width:3px;height:17px;background:#3a3a3a"></b>
<b style="left:1018px;top:885px;width:3px;height:17px;background:#3a3a3a"></b>
<i style="left:922px;top:736px;color:#eeeeee;font-weight:bold">download</i>
<i style="left:922px;top:886px;color:#eeeeee;font-weight:bold">upload</i>
<b style="left:893px;top:775px;width:0;height:0;border-left:6.5px solid transparent;border-right:6.5px solid transparent;border-top:13px solid #d0d0d0"></b>
<b style="left:893px;top:805px;width:0;height:0;border-left:6.5px solid transparent;border-right:6.5px solid transparent;border-top:13px solid #d0d0d0"></b>
<b style="left:893px;top:835px;width:0;height:0;border-left:6.5px solid transparent;border-right:6.5px solid transparent;border-bottom:13px solid #d0d0d0"></b>
<b style="left:893px;top:865px;width:0;height:0;border-left:6.5px solid transparent;border-right:6.5px solid transparent;border-bottom:13px solid #d0d0d0"></b>
<i style="left:922px;top:766px;color:#d0d0d0">86 Byte/s</i>
<i style="left:1102px;top:766px;color:#d0d0d0">(688 bitps)</i>
<i style="left:922px;top:796px;color:#d0d0d0">Total:</i>
<i style="left:1147px;top:796px;color:#d0d0d0">18.7 MiB</i>
<i style="left:922px;top:826px;color:#d0d0d0">43 Byte/s</i>
<i style="left:1102px;top:826px;color:#d0d0d0">(344 bitps)</i>
<i style="left:922px;top:856px;color:#d0d0d0">Total:</i>
<i style="left:1147px;top:856px;color:#d0d0d0">11.9 MiB</i>
<b style="left:742px;top:819px;width:135px;height:3px;background:repeating-linear-gradient(90deg,transparent 0 2px,#6a5cc0 2px 5px,transparent 5px 9px,#6a5cc0 9px 12px,transparent 12px 15px)"></b>
<b style="left:736px;top:819px;width:3px;height:3px;background:#6a5cc0"></b>
<b style="left:742px;top:827px;width:135px;height:3px;background:repeating-linear-gradient(90deg,transparent 0 2px,#a04a90 2px 5px,transparent 5px 9px,#a04a90 9px 12px,transparent 12px 15px)"></b>
<b style="left:736px;top:827px;width:3px;height:3px;background:#a04a90"></b>
<b style="left:789px;top:782px;width:3px;height:3px;background:#6a5cc0"></b>
<b style="left:789px;top:789px;width:3px;height:3px;background:#6a5cc0"></b>
<b style="left:789px;top:797px;width:3px;height:3px;background:#6a5cc0"></b>
<b style="left:789px;top:804.5px;width:3px;height:3px;background:#6a5cc0"></b>
<b style="left:789px;top:812px;width:3px;height:3px;background:#6a5cc0"></b>
<b style="left:804px;top:789px;width:3px;height:3px;background:#6a5cc0"></b>
<b style="left:804px;top:797px;width:3px;height:3px;background:#6a5cc0"></b>
<b style="left:804px;top:804.5px;width:3px;height:3px;background:#6a5cc0"></b>
<b style="left:804px;top:812px;width:3px;height:3px;background:#6a5cc0"></b>
<b style="left:796px;top:812px;width:3px;height:3px;background:#6a5cc0"></b>
<b style="left:811px;top:812px;width:3px;height:3px;background:#6a5cc0"></b>
<b style="left:834px;top:812px;width:3px;height:3px;background:#6a5cc0"></b>
<b style="left:759px;top:834.5px;width:3px;height:3px;background:#a04a90"></b>
<b style="left:759px;top:842px;width:3px;height:3px;background:#a04a90"></b>
<b style="left:759px;top:849px;width:3px;height:3px;background:#a04a90"></b>
<b style="left:759px;top:857px;width:3px;height:3px;background:#a04a90"></b>
<b style="left:759px;top:864.5px;width:3px;height:3px;background:#a04a90"></b>
<b style="left:774px;top:834.5px;width:3px;height:3px;background:#a04a90"></b>
<b style="left:774px;top:842px;width:3px;height:3px;background:#a04a90"></b>
<b style="left:789px;top:834.5px;width:3px;height:3px;background:#a04a90"></b>
<b style="left:789px;top:842px;width:3px;height:3px;background:#a04a90"></b>
<b style="left:789px;top:849px;width:3px;height:3px;background:#a04a90"></b>
<b style="left:789px;top:857px;width:3px;height:3px;background:#a04a90"></b>
<b style="left:789px;top:864.5px;width:3px;height:3px;background:#a04a90"></b>
<b style="left:789px;top:872px;width:3px;height:3px;background:#a04a90"></b>
<b style="left:1303px;top:419px;width:1563px;height:513px;border:3px solid #7e5c5a;border-radius:8px;box-sizing:border-box"></b>
<b style="left:1336px;top:418px;width:87px;height:5px;background:#000"></b>
<b style="left:1333px;top:419px;width:3px;height:16px;background:#7e5c5a"></b>
<b style="left:1423px;top:419px;width:3px;height:16px;background:#7e5c5a"></b>
<b style="left:1441px;top:418px;width:102px;height:5px;background:#000"></b>
<b style="left:1438px;top:419px;width:3px;height:16px;background:#7e5c5a"></b>
<b style="left:1543px;top:419px;width:3px;height:16px;background:#7e5c5a"></b>
<b style="left:2266px;top:418px;width:132px;height:5px;background:#000"></b>
<b style="left:2263px;top:419px;width:3px;height:16px;background:#7e5c5a"></b>
<b style="left:2398px;top:419px;width:3px;height:16px;background:#7e5c5a"></b>
<b style="left:2416px;top:418px;width:117px;height:5px;background:#000"></b>
<b style="left:2413px;top:419px;width:3px;height:16px;background:#7e5c5a"></b>
<b style="left:2533px;top:419px;width:3px;height:16px;background:#7e5c5a"></b>
<b style="left:2551px;top:418px;width:72px;height:5px;background:#000"></b>
<b style="left:2548px;top:419px;width:3px;height:16px;background:#7e5c5a"></b>
<b style="left:2623px;top:419px;width:3px;height:16px;background:#7e5c5a"></b>
<b style="left:2641px;top:418px;width:192px;height:5px;background:#000"></b>
<b style="left:2638px;top:419px;width:3px;height:16px;background:#7e5c5a"></b>
<b style="left:2833px;top:419px;width:3px;height:16px;background:#7e5c5a"></b>
<i style="left:1346px;top:411px;color:#d04a4a;font-weight:bold;font-size:12px;line-height:12px">4</i>
<i style="left:1357px;top:406px;color:#eeeeee;font-weight:bold">proc</i>
<i style="left:1447px;top:406px;color:#d04a4a">f</i>
<i style="left:1462px;top:406px;color:#eeeeee">ilter</i>
<i style="left:2272px;top:406px;color:#eeeeee">per-</i>
<i style="left:2332px;top:406px;color:#d04a4a">c</i>
<i style="left:2347px;top:406px;color:#eeeeee">ore</i>
<i style="left:2422px;top:406px;color:#d04a4a">r</i>
<i style="left:2437px;top:406px;color:#eeeeee">everse</i>
<i style="left:2557px;top:406px;color:#eeeeee">tre</i>
<i style="left:2602px;top:406px;color:#d04a4a">e</i>
<svg style="position:absolute;left:2647px;top:405px" width="15" height="30" viewBox="0 0 15 30"><path d="M1.5 15 L14.5 15 M8.5 8 L1.5 15 L8.5 22" fill="none" stroke="#d04a4a" stroke-width="3"/></svg>
<i style="left:2677px;top:406px;color:#eeeeee;font-weight:bold">cpu lazy</i>
<svg style="position:absolute;left:2812px;top:405px" width="15" height="30" viewBox="0 0 15 30"><path d="M0.5 15 L13.5 15 M6.5 8 L13.5 15 L6.5 22" fill="none" stroke="#d04a4a" stroke-width="3"/></svg>
<i style="left:1372px;top:436px;color:#eeeeee;font-weight:bold">Pid:</i>
<i style="left:1447px;top:436px;color:#eeeeee;font-weight:bold">Program:</i>
<i style="left:1702px;top:436px;color:#eeeeee;font-weight:bold">Command:</i>
<i style="left:2287px;top:436px;color:#eeeeee;font-weight:bold">Threads:</i>
<i style="left:2422px;top:436px;color:#eeeeee;font-weight:bold">User:</i>
<i style="left:2602px;top:436px;color:#eeeeee;font-weight:bold">MemB</i>
<i style="left:2767px;top:436px;color:#eeeeee;font-weight:bold">Cpu%</i>
<svg style="position:absolute;left:2842px;top:435px" width="15" height="30" viewBox="0 0 15 30"><path d="M7.5 26 L7.5 7 M0.5 14 L7.5 7 L14.5 14" fill="none" stroke="#eeeeee" stroke-width="3"/></svg>
<i style="left:1372px;top:466px;color:#d4d4d4">8646</i>
<i style="left:1447px;top:466px;color:#82d0a4">code</i>
<i style="left:1702px;top:466px;color:#d4d4d4">/usr/share/code/code --type=zygote</i>
<i style="left:2377px;top:466px;color:#82d0a4">24</i>
<i style="left:2422px;top:466px;color:#dcdcdc">simon</i>
<i style="left:2602px;top:466px;color:#82d0a4">400M</i>
<b style="left:2679px;top:489px;width:3px;height:3px;background:#464646"></b>
<b style="left:2686px;top:489px;width:3px;height:3px;background:#464646"></b>
<b style="left:2694px;top:489px;width:3px;height:3px;background:#464646"></b>
<b style="left:2701px;top:489px;width:3px;height:3px;background:#464646"></b>
<b style="left:2709px;top:489px;width:3px;height:3px;background:#464646"></b>
<b style="left:2716px;top:489px;width:3px;height:3px;background:#464646"></b>
<b style="left:2724px;top:489px;width:3px;height:3px;background:#464646"></b>
<b style="left:2731px;top:489px;width:3px;height:3px;background:#464646"></b>
<b style="left:2739px;top:489px;width:3px;height:3px;background:#464646"></b>
<b style="left:2746px;top:489px;width:3px;height:3px;background:#464646"></b>
<i style="left:2782px;top:466px;color:#82d0a4">0.0</i>
<i style="left:1372px;top:496px;color:#cbcbcb">8721</i>
<i style="left:1447px;top:496px;color:#7fc89f">code</i>
<i style="left:1702px;top:496px;color:#cbcbcb">/proc/self/exe --type=utility --utility-su</i>
<i style="left:2377px;top:496px;color:#7fc89f">22</i>
<i style="left:2422px;top:496px;color:#d7d7d7">simon</i>
<i style="left:2602px;top:496px;color:#7fc89f">574M</i>
<b style="left:2679px;top:519px;width:3px;height:3px;background:#464646"></b>
<b style="left:2686px;top:519px;width:3px;height:3px;background:#464646"></b>
<b style="left:2694px;top:519px;width:3px;height:3px;background:#464646"></b>
<b style="left:2701px;top:519px;width:3px;height:3px;background:#464646"></b>
<b style="left:2709px;top:519px;width:3px;height:3px;background:#464646"></b>
<b style="left:2716px;top:519px;width:3px;height:3px;background:#464646"></b>
<b style="left:2724px;top:519px;width:3px;height:3px;background:#464646"></b>
<b style="left:2731px;top:519px;width:3px;height:3px;background:#464646"></b>
<b style="left:2739px;top:519px;width:3px;height:3px;background:#464646"></b>
<b style="left:2746px;top:519px;width:3px;height:3px;background:#464646"></b>
<i style="left:2782px;top:496px;color:#7fc89f">0.0</i>
<i style="left:1372px;top:526px;color:#c2c2c2">4190</i>
<i style="left:1447px;top:526px;color:#7cbf99">gnome-shell</i>
<i style="left:1702px;top:526px;color:#c2c2c2">/usr/bin/gnome-shell</i>
<i style="left:2377px;top:526px;color:#7cbf99">36</i>
<i style="left:2422px;top:526px;color:#d3d3d3">simon</i>
<i style="left:2602px;top:526px;color:#7cbf99">358M</i>
<b style="left:2679px;top:549px;width:3px;height:3px;background:#a6dcc2"></b>
<b style="left:2694px;top:549px;width:3px;height:3px;background:#464646"></b>
<b style="left:2701px;top:549px;width:3px;height:3px;background:#464646"></b>
<b style="left:2709px;top:549px;width:3px;height:3px;background:#464646"></b>
<b style="left:2716px;top:549px;width:3px;height:3px;background:#464646"></b>
<b style="left:2724px;top:549px;width:3px;height:3px;background:#464646"></b>
<b style="left:2731px;top:549px;width:3px;height:3px;background:#464646"></b>
<b style="left:2739px;top:549px;width:3px;height:3px;background:#464646"></b>
<b style="left:2746px;top:549px;width:3px;height:3px;background:#464646"></b>
<i style="left:2782px;top:526px;color:#7cbf99">0.0</i>
<i style="left:1372px;top:556px;color:#b9b9b9">8612</i>
<i style="left:1447px;top:556px;color:#79b794">code</i>
<i style="left:1702px;top:556px;color:#b9b9b9">/usr/share/code/code --type=zygote --no-zy</i>
<i style="left:2377px;top:556px;color:#79b794">19</i>
<i style="left:2422px;top:556px;color:#cecece">simon</i>
<i style="left:2602px;top:556px;color:#79b794">220M</i>
<b style="left:2679px;top:579px;width:3px;height:3px;background:#464646"></b>
<b style="left:2686px;top:579px;width:3px;height:3px;background:#464646"></b>
<b style="left:2694px;top:579px;width:3px;height:3px;background:#464646"></b>
<b style="left:2701px;top:579px;width:3px;height:3px;background:#464646"></b>
<b style="left:2709px;top:579px;width:3px;height:3px;background:#464646"></b>
<b style="left:2716px;top:579px;width:3px;height:3px;background:#464646"></b>
<b style="left:2724px;top:579px;width:3px;height:3px;background:#464646"></b>
<b style="left:2731px;top:579px;width:3px;height:3px;background:#464646"></b>
<b style="left:2739px;top:579px;width:3px;height:3px;background:#464646"></b>
<b style="left:2746px;top:579px;width:3px;height:3px;background:#464646"></b>
<i style="left:2782px;top:556px;color:#79b794">0.0</i>
<i style="left:1357px;top:586px;color:#b1b1b1">11939</i>
<i style="left:1447px;top:586px;color:#76af8f">nvim</i>
<i style="left:1702px;top:586px;color:#b1b1b1">nvim --embed .</i>
<i style="left:2392px;top:586px;color:#76af8f">5</i>
<i style="left:2422px;top:586px;color:#c9c9c9">simon</i>
<i style="left:2617px;top:586px;color:#76af8f">38M</i>
<b style="left:2679px;top:609px;width:3px;height:3px;background:#b0b0b0"></b>
<b style="left:2694px;top:609px;width:3px;height:3px;background:#a6dcc2"></b>
<b style="left:2701px;top:609px;width:3px;height:3px;background:#a6dcc2"></b>
<b style="left:2716px;top:609px;width:3px;height:3px;background:#a6dcc2"></b>
<b style="left:2731px;top:609px;width:3px;height:3px;background:#a6dcc2"></b>
<b style="left:2746px;top:609px;width:3px;height:3px;background:#a6dcc2"></b>
<i style="left:2782px;top:586px;color:#76af8f">0.1</i>
<i style="left:1372px;top:616px;color:#a8a8a8">8534</i>
<i style="left:1447px;top:616px;color:#73a789">code</i>
<i style="left:1702px;top:616px;color:#a8a8a8">/usr/share/code/code .</i>
<i style="left:2377px;top:616px;color:#73a789">42</i>
<i style="left:2422px;top:616px;color:#c4c4c4">simon</i>
<i style="left:2602px;top:616px;color:#73a789">245M</i>
<b style="left:2679px;top:639px;width:3px;height:3px;background:#464646"></b>
<b style="left:2686px;top:639px;width:3px;height:3px;background:#464646"></b>
<b style="left:2694px;top:639px;width:3px;height:3px;background:#464646"></b>
<b style="left:2701px;top:639px;width:3px;height:3px;background:#464646"></b>
<b style="left:2709px;top:639px;width:3px;height:3px;background:#464646"></b>
<b style="left:2716px;top:639px;width:3px;height:3px;background:#464646"></b>
<b style="left:2724px;top:639px;width:3px;height:3px;background:#464646"></b>
<b style="left:2731px;top:639px;width:3px;height:3px;background:#464646"></b>
<b style="left:2739px;top:639px;width:3px;height:3px;background:#464646"></b>
<b style="left:2746px;top:639px;width:3px;height:3px;background:#464646"></b>
<i style="left:2782px;top:616px;color:#73a789">0.0</i>
<i style="left:1372px;top:646px;color:#9f9f9f">7390</i>
<i style="left:1447px;top:646px;color:#709e84">brave</i>
<i style="left:1702px;top:646px;color:#9f9f9f">/app/brave/brave --disable-features=WebAss</i>
<i style="left:2377px;top:646px;color:#709e84">37</i>
<i style="left:2422px;top:646px;color:#c0c0c0">simon</i>
<i style="left:2602px;top:646px;color:#709e84">413M</i>
<b style="left:2679px;top:669px;width:3px;height:3px;background:#464646"></b>
<b style="left:2686px;top:669px;width:3px;height:3px;background:#464646"></b>
<b style="left:2694px;top:669px;width:3px;height:3px;background:#464646"></b>
<b style="left:2701px;top:669px;width:3px;height:3px;background:#464646"></b>
<b style="left:2709px;top:669px;width:3px;height:3px;background:#464646"></b>
<b style="left:2716px;top:669px;width:3px;height:3px;background:#464646"></b>
<b style="left:2724px;top:669px;width:3px;height:3px;background:#464646"></b>
<b style="left:2731px;top:669px;width:3px;height:3px;background:#464646"></b>
<b style="left:2739px;top:669px;width:3px;height:3px;background:#464646"></b>
<b style="left:2746px;top:669px;width:3px;height:3px;background:#464646"></b>
<i style="left:2782px;top:646px;color:#709e84">0.0</i>
<i style="left:1372px;top:676px;color:#969696">7073</i>
<i style="left:1447px;top:676px;color:#6c967e">bazaar</i>
<i style="left:1702px;top:676px;color:#969696">/usr/bin/bazaar --no-window</i>
<i style="left:2377px;top:676px;color:#6c967e">38</i>
<i style="left:2422px;top:676px;color:#bbbbbb">simon</i>
<i style="left:2602px;top:676px;color:#6c967e">185M</i>
<b style="left:2679px;top:699px;width:3px;height:3px;background:#464646"></b>
<b style="left:2686px;top:699px;width:3px;height:3px;background:#464646"></b>
<b style="left:2694px;top:699px;width:3px;height:3px;background:#464646"></b>
<b style="left:2701px;top:699px;width:3px;height:3px;background:#464646"></b>
<b style="left:2709px;top:699px;width:3px;height:3px;background:#464646"></b>
<b style="left:2716px;top:699px;width:3px;height:3px;background:#464646"></b>
<b style="left:2724px;top:699px;width:3px;height:3px;background:#464646"></b>
<b style="left:2731px;top:699px;width:3px;height:3px;background:#464646"></b>
<b style="left:2739px;top:699px;width:3px;height:3px;background:#464646"></b>
<b style="left:2746px;top:699px;width:3px;height:3px;background:#464646"></b>
<i style="left:2782px;top:676px;color:#6c967e">0.0</i>
<i style="left:1372px;top:706px;color:#8d8d8d">7911</i>
<i style="left:1447px;top:706px;color:#698e79">brave</i>
<i style="left:1702px;top:706px;color:#8d8d8d">/app/brave/brave --type=renderer --crashpa</i>
<i style="left:2377px;top:706px;color:#698e79">25</i>
<i style="left:2422px;top:706px;color:#b6b6b6">simon</i>
<i style="left:2602px;top:706px;color:#698e79">267M</i>
<b style="left:2679px;top:729px;width:3px;height:3px;background:#464646"></b>
<b style="left:2686px;top:729px;width:3px;height:3px;background:#464646"></b>
<b style="left:2694px;top:729px;width:3px;height:3px;background:#b0b0b0"></b>
<b style="left:2701px;top:729px;width:3px;height:3px;background:#b0b0b0"></b>
<b style="left:2709px;top:729px;width:3px;height:3px;background:#464646"></b>
<b style="left:2716px;top:729px;width:3px;height:3px;background:#464646"></b>
<b style="left:2724px;top:729px;width:3px;height:3px;background:#464646"></b>
<b style="left:2731px;top:729px;width:3px;height:3px;background:#464646"></b>
<b style="left:2739px;top:729px;width:3px;height:3px;background:#464646"></b>
<b style="left:2746px;top:729px;width:3px;height:3px;background:#464646"></b>
<i style="left:2782px;top:706px;color:#698e79">0.0</i>
<i style="left:1372px;top:736px;color:#848484">8197</i>
<i style="left:1447px;top:736px;color:#668574">brave</i>
<i style="left:1702px;top:736px;color:#848484">/app/brave/brave --type=renderer --crashpa</i>
<i style="left:2377px;top:736px;color:#668574">26</i>
<i style="left:2422px;top:736px;color:#b2b2b2">simon</i>
<i style="left:2602px;top:736px;color:#668574">255M</i>
<b style="left:2679px;top:759px;width:3px;height:3px;background:#464646"></b>
<b style="left:2686px;top:759px;width:3px;height:3px;background:#464646"></b>
<b style="left:2694px;top:759px;width:3px;height:3px;background:#b0b0b0"></b>
<b style="left:2701px;top:759px;width:3px;height:3px;background:#b0b0b0"></b>
<b style="left:2709px;top:759px;width:3px;height:3px;background:#464646"></b>
<b style="left:2716px;top:759px;width:3px;height:3px;background:#464646"></b>
<b style="left:2724px;top:759px;width:3px;height:3px;background:#464646"></b>
<b style="left:2731px;top:759px;width:3px;height:3px;background:#464646"></b>
<b style="left:2739px;top:759px;width:3px;height:3px;background:#464646"></b>
<b style="left:2746px;top:759px;width:3px;height:3px;background:#464646"></b>
<i style="left:2782px;top:736px;color:#668574">0.0</i>
<i style="left:1372px;top:766px;color:#7b7b7b">8074</i>
<i style="left:1447px;top:766px;color:#637d6e">brave</i>
<i style="left:1702px;top:766px;color:#7b7b7b">/app/brave/brave --type=renderer --crashpa</i>
<i style="left:2377px;top:766px;color:#637d6e">25</i>
<i style="left:2422px;top:766px;color:#adadad">simon</i>
<i style="left:2602px;top:766px;color:#637d6e">253M</i>
<b style="left:2679px;top:789px;width:3px;height:3px;background:#464646"></b>
<b style="left:2686px;top:789px;width:3px;height:3px;background:#464646"></b>
<b style="left:2694px;top:789px;width:3px;height:3px;background:#464646"></b>
<b style="left:2701px;top:789px;width:3px;height:3px;background:#464646"></b>
<b style="left:2709px;top:789px;width:3px;height:3px;background:#464646"></b>
<b style="left:2716px;top:789px;width:3px;height:3px;background:#464646"></b>
<b style="left:2724px;top:789px;width:3px;height:3px;background:#464646"></b>
<b style="left:2731px;top:789px;width:3px;height:3px;background:#464646"></b>
<b style="left:2746px;top:789px;width:3px;height:3px;background:#b0b0b0"></b>
<i style="left:2782px;top:766px;color:#637d6e">0.3</i>
<i style="left:1357px;top:796px;color:#737373">11665</i>
<i style="left:1447px;top:796px;color:#607569">btop</i>
<i style="left:1702px;top:796px;color:#737373">btop</i>
<i style="left:2392px;top:796px;color:#607569">2</i>
<i style="left:2422px;top:796px;color:#a8a8a8">simon</i>
<i style="left:2602px;top:796px;color:#607569">9.0M</i>
<b style="left:2679px;top:819px;width:3px;height:3px;background:#464646"></b>
<b style="left:2686px;top:819px;width:3px;height:3px;background:#464646"></b>
<b style="left:2694px;top:819px;width:3px;height:3px;background:#464646"></b>
<b style="left:2701px;top:819px;width:3px;height:3px;background:#464646"></b>
<b style="left:2709px;top:819px;width:3px;height:3px;background:#464646"></b>
<b style="left:2716px;top:819px;width:3px;height:3px;background:#464646"></b>
<b style="left:2724px;top:819px;width:3px;height:3px;background:#464646"></b>
<b style="left:2731px;top:819px;width:3px;height:3px;background:#464646"></b>
<b style="left:2739px;top:819px;width:3px;height:3px;background:#464646"></b>
<b style="left:2746px;top:819px;width:3px;height:3px;background:#464646"></b>
<i style="left:2782px;top:796px;color:#607569">0.0</i>
<i style="left:1372px;top:826px;color:#6a6a6a">8730</i>
<i style="left:1447px;top:826px;color:#5d6d64">code</i>
<i style="left:1702px;top:826px;color:#6a6a6a">/proc/self/exe --type=utility --utility-su</i>
<i style="left:2377px;top:826px;color:#5d6d64">21</i>
<i style="left:2422px;top:826px;color:#a3a3a3">simon</i>
<i style="left:2602px;top:826px;color:#5d6d64">118M</i>
<b style="left:2679px;top:849px;width:3px;height:3px;background:#464646"></b>
<b style="left:2686px;top:849px;width:3px;height:3px;background:#464646"></b>
<b style="left:2694px;top:849px;width:3px;height:3px;background:#464646"></b>
<b style="left:2701px;top:849px;width:3px;height:3px;background:#464646"></b>
<b style="left:2709px;top:849px;width:3px;height:3px;background:#464646"></b>
<b style="left:2716px;top:849px;width:3px;height:3px;background:#464646"></b>
<b style="left:2724px;top:849px;width:3px;height:3px;background:#464646"></b>
<b style="left:2731px;top:849px;width:3px;height:3px;background:#464646"></b>
<b style="left:2739px;top:849px;width:3px;height:3px;background:#464646"></b>
<b style="left:2746px;top:849px;width:3px;height:3px;background:#464646"></b>
<i style="left:2782px;top:826px;color:#5d6d64">0.0</i>
<i style="left:1372px;top:856px;color:#616161">7565</i>
<i style="left:1447px;top:856px;color:#5a645e">brave</i>
<i style="left:1702px;top:856px;color:#616161">/app/brave/brave --type=gpu-process --ozon</i>
<i style="left:2377px;top:856px;color:#5a645e">26</i>
<i style="left:2422px;top:856px;color:#9f9f9f">simon</i>
<i style="left:2602px;top:856px;color:#5a645e">285M</i>
<b style="left:2679px;top:879px;width:3px;height:3px;background:#464646"></b>
<b style="left:2686px;top:879px;width:3px;height:3px;background:#464646"></b>
<b style="left:2694px;top:879px;width:3px;height:3px;background:#464646"></b>
<b style="left:2701px;top:879px;width:3px;height:3px;background:#464646"></b>
<b style="left:2709px;top:879px;width:3px;height:3px;background:#464646"></b>
<b style="left:2716px;top:879px;width:3px;height:3px;background:#464646"></b>
<b style="left:2724px;top:879px;width:3px;height:3px;background:#464646"></b>
<b style="left:2731px;top:879px;width:3px;height:3px;background:#464646"></b>
<b style="left:2739px;top:879px;width:3px;height:3px;background:#464646"></b>
<b style="left:2746px;top:879px;width:3px;height:3px;background:#464646"></b>
<i style="left:2782px;top:856px;color:#5a645e">0.0</i>
<i style="left:1372px;top:886px;color:#585858">8621</i>
<i style="left:1447px;top:886px;color:#575c59">code</i>
<i style="left:1702px;top:886px;color:#585858">/proc/self/exe --type=utility --utility-su</i>
<i style="left:2377px;top:886px;color:#575c59">13</i>
<i style="left:2422px;top:886px;color:#9a9a9a">simon</i>
<i style="left:2617px;top:886px;color:#575c59">77M</i>
<b style="left:2679px;top:909px;width:3px;height:3px;background:#464646"></b>
<b style="left:2686px;top:909px;width:3px;height:3px;background:#464646"></b>
<b style="left:2694px;top:909px;width:3px;height:3px;background:#464646"></b>
<b style="left:2701px;top:909px;width:3px;height:3px;background:#464646"></b>
<b style="left:2709px;top:909px;width:3px;height:3px;background:#464646"></b>
<b style="left:2716px;top:909px;width:3px;height:3px;background:#464646"></b>
<b style="left:2724px;top:909px;width:3px;height:3px;background:#464646"></b>
<b style="left:2731px;top:909px;width:3px;height:3px;background:#464646"></b>
<b style="left:2739px;top:909px;width:3px;height:3px;background:#464646"></b>
<b style="left:2746px;top:909px;width:3px;height:3px;background:#464646"></b>
<i style="left:2782px;top:886px;color:#575c59">0.0</i>
<b style="left:2843px;top:465px;width:14px;height:30px;background:#d0d0d0"></b>
<svg style="position:absolute;left:2842px;top:885px" width="15" height="30" viewBox="0 0 15 30"><path d="M7.5 4 L7.5 23 M0.5 16 L7.5 23 L14.5 16" fill="none" stroke="#eeeeee" stroke-width="3"/></svg>
<b style="left:1321px;top:928px;width:162px;height:5px;background:#000"></b>
<b style="left:1318px;top:915px;width:3px;height:17px;background:#7e5c5a"></b>
<b style="left:1483px;top:915px;width:3px;height:17px;background:#7e5c5a"></b>
<b style="left:1501px;top:928px;width:102px;height:5px;background:#000"></b>
<b style="left:1498px;top:915px;width:3px;height:17px;background:#7e5c5a"></b>
<b style="left:1603px;top:915px;width:3px;height:17px;background:#7e5c5a"></b>
<b style="left:1621px;top:928px;width:147px;height:5px;background:#000"></b>
<b style="left:1618px;top:915px;width:3px;height:17px;background:#7e5c5a"></b>
<b style="left:1768px;top:915px;width:3px;height:17px;background:#7e5c5a"></b>
<b style="left:1786px;top:928px;width:72px;height:5px;background:#000"></b>
<b style="left:1783px;top:915px;width:3px;height:17px;background:#7e5c5a"></b>
<b style="left:1858px;top:915px;width:3px;height:17px;background:#7e5c5a"></b>
<b style="left:1876px;top:928px;width:117px;height:5px;background:#000"></b>
<b style="left:1873px;top:915px;width:3px;height:17px;background:#7e5c5a"></b>
<b style="left:1993px;top:915px;width:3px;height:17px;background:#7e5c5a"></b>
<b style="left:2011px;top:928px;width:72px;height:5px;background:#000"></b>
<b style="left:2008px;top:915px;width:3px;height:17px;background:#7e5c5a"></b>
<b style="left:2083px;top:915px;width:3px;height:17px;background:#7e5c5a"></b>
<b style="left:2761px;top:928px;width:87px;height:5px;background:#000"></b>
<b style="left:2758px;top:915px;width:3px;height:17px;background:#7e5c5a"></b>
<b style="left:2848px;top:915px;width:3px;height:17px;background:#7e5c5a"></b>
<svg style="position:absolute;left:1327px;top:915px" width="15" height="30" viewBox="0 0 15 30"><path d="M7.5 26 L7.5 7 M0.5 14 L7.5 7 L14.5 14" fill="none" stroke="#9a9a9a" stroke-width="3"/></svg>
<i style="left:1357px;top:916px;color:#eeeeee;font-weight:bold">select</i>
<svg style="position:absolute;left:1462px;top:915px" width="15" height="30" viewBox="0 0 15 30"><path d="M7.5 4 L7.5 23 M0.5 16 L7.5 23 L14.5 16" fill="none" stroke="#d04a4a" stroke-width="3"/></svg>
<i style="left:1507px;top:916px;color:#4e4e4e;font-weight:bold">info</i>
<svg style="position:absolute;left:1582px;top:915px" width="15" height="30" viewBox="0 0 15 30"><path d="M12 6 L12 20 L2.5 20 M7 15.5 L2.5 20 L7 24.5" fill="none" stroke="#4e4e4e" stroke-width="2.6"/></svg>
<i style="left:1627px;top:916px;color:#4e4e4e;font-weight:bold">terminate</i>
<i style="left:1792px;top:916px;color:#4e4e4e;font-weight:bold">kill</i>
<i style="left:1882px;top:916px;color:#4e4e4e;font-weight:bold">signals</i>
<i style="left:2017px;top:916px;color:#4e4e4e;font-weight:bold">Nice</i>
<i style="left:2767px;top:916px;color:#eeeeee;font-weight:bold">0/506</i>
<b style="left:0px;top:945px;width:1431px;height:2px;background:#b8bef0"></b>
<b style="left:1431px;top:945px;width:1448px;height:2px;background:#85889a"></b>
<b style="left:0px;top:947px;width:1431px;height:852px;background:#222436"></b>
<b style="left:0px;top:947px;width:613px;height:816px;background:#1e2030"></b>
<b style="left:1433px;top:947px;width:1446px;height:852px;background:#222436"></b>
<b style="left:1431px;top:947px;width:2px;height:852px;background:#b8bef0"></b>
<b style="left:13px;top:967px;width:588px;height:63px;border:3px solid #ff966c;border-radius:9px;box-sizing:border-box"></b>
<b style="left:232px;top:963px;width:150px;height:10px;background:#1e2030"></b>
<i style="left:247px;top:954px;color:#ff966c">Explorer</i>
<svg style="position:absolute;left:25px;top:991px" width="12" height="16" viewBox="0 0 12 16"><path d="M2 2 L9 8 L2 14" fill="none" stroke="#65bcff" stroke-width="2.6" stroke-linecap="round" stroke-linejoin="round"/></svg>
<i style="left:502px;top:984px;color:#4a5272">12/12</i>
<b style="left:28px;top:1072px;width:2px;height:316px;background:#454b6b"></b>
<b style="left:28px;top:1087px;width:15px;height:2px;background:#454b6b"></b>
<b style="left:28px;top:1117px;width:15px;height:2px;background:#454b6b"></b>
<b style="left:28px;top:1147px;width:15px;height:2px;background:#454b6b"></b>
<b style="left:28px;top:1177px;width:15px;height:2px;background:#454b6b"></b>
<b style="left:28px;top:1207px;width:15px;height:2px;background:#454b6b"></b>
<b style="left:28px;top:1237px;width:15px;height:2px;background:#454b6b"></b>
<b style="left:28px;top:1267px;width:15px;height:2px;background:#454b6b"></b>
<b style="left:28px;top:1297px;width:15px;height:2px;background:#454b6b"></b>
<b style="left:28px;top:1327px;width:15px;height:2px;background:#454b6b"></b>
<b style="left:28px;top:1357px;width:15px;height:2px;background:#454b6b"></b>
<b style="left:28px;top:1387px;width:15px;height:2px;background:#454b6b"></b>
<b style="left:7px;top:1193px;width:600px;height:30px;background:#2f334d"></b>
<b style="left:28px;top:1193px;width:2px;height:30px;background:#454b6e"></b>
<b style="left:28px;top:1207px;width:13px;height:2px;background:#454b6e"></b>
<svg style="position:absolute;left:20px;top:1049px" width="24" height="19" viewBox="0 0 24 19"><path d="M1.2 2.3 Q1.2 1.1 2.4 1.1 L10.6 1.1 L11.7 2.9 L19 2.9 Q20.1 2.9 20.1 4 L20.1 5.8 L4.5 5.8 Q3.3 5.8 3 7 L1.2 15 Z" fill="#14bfd9"/><path d="M3.6 6.7 L23.2 6.7 L20.3 17.8 L1.2 17.8 Z" fill="#14bfd9" stroke="#1e2030" stroke-width="0.8"/></svg>
<i style="left:52px;top:1044px;color:#82aaff">simonneutert.github.io</i>
<svg style="position:absolute;left:50px;top:1079px" width="23" height="20" viewBox="0 0 23 20"><path d="M1 2.8 Q1 1.3 2.5 1.3 L9.8 1.3 L11.8 3.2 L19.9 3.2 Q21.4 3.2 21.4 4.7 L21.4 16.5 Q21.4 18 19.9 18 L2.5 18 Q1 18 1 16.5 Z" fill="#14bfd9"/></svg>
<i style="left:82px;top:1074px;color:#82aaff">pages</i>
<svg style="position:absolute;left:50px;top:1109px" width="23" height="20" viewBox="0 0 23 20"><path d="M1 2.8 Q1 1.3 2.5 1.3 L9.8 1.3 L11.8 3.2 L19.9 3.2 Q21.4 3.2 21.4 4.7 L21.4 16.5 Q21.4 18 19.9 18 L2.5 18 Q1 18 1 16.5 Z" fill="#14bfd9"/></svg>
<i style="left:82px;top:1104px;color:#545c7e">posts</i>
<i style="left:577px;top:1104px;color:#545c7e">?</i>
<svg style="position:absolute;left:50px;top:1139px" width="23" height="20" viewBox="0 0 23 20"><path d="M1 2.8 Q1 1.3 2.5 1.3 L9.8 1.3 L11.8 3.2 L19.9 3.2 Q21.4 3.2 21.4 4.7 L21.4 16.5 Q21.4 18 19.9 18 L2.5 18 Q1 18 1 16.5 Z" fill="#14bfd9"/></svg>
<i style="left:82px;top:1134px;color:#82aaff">public</i>
<svg style="position:absolute;left:51px;top:1169px" width="16" height="20" viewBox="0 0 16 20"><path d="M1 2 Q1 1 2 1 L9 1 L15 7 L15 18 Q15 19 14 19 L2 19 Q1 19 1 18 Z" fill="#c8d3f5"/><path d="M9 1 L9 7 L15 7" fill="#1e2030" opacity="0.35"/></svg>
<i style="left:82px;top:1164px;color:#c8d3f5">CNAME</i>
<svg style="position:absolute;left:49px;top:1194px" width="27" height="27" viewBox="0 0 27 27"><g fill="none" stroke="#ffc777" stroke-width="3" stroke-linecap="round" stroke-linejoin="round"><path d="M21 8.1 L6 8.1 Q2.6 8.1 2.6 5.4 Q2.6 2.7 6 2.7 L21 2.7 Q24.2 2.7 24.2 6 Q24.2 7.5 23 9.5 L17.6 21.5"/><path d="M8.3 9.3 L3.2 21.5 Q2.6 25.1 6.2 25.1 L22 25.1 Q25.3 25.1 25.3 21.6 Q25.3 18.2 22.2 18.2 Q19.3 18.2 18.6 21.5"/></g><path d="M9.2 13.8 L16.7 13.8 M6.6 18.3 L14 18.3" stroke="#ffc777" stroke-width="2.6" stroke-linecap="round"/></svg>
<i style="left:82px;top:1194px;color:#c8d3f5">README.md</i>
<i style="left:49px;top:1225px;color:#ffc777;font-size:20px;letter-spacing:-3.5px">{…}</i>
<i style="left:82px;top:1224px;color:#c8d3f5">deno.json</i>
<i style="left:49px;top:1255px;color:#ffc777;font-size:20px;letter-spacing:-3.5px">{…}</i>
<i style="left:82px;top:1254px;color:#c8d3f5">deno.lock</i>
<svg style="position:absolute;left:51px;top:1292px" width="21" height="14" viewBox="0 0 21 14"><rect x="0" y="0" width="21" height="14" rx="2" fill="#c8d3f5"/><path d="M3 11 L3 3 L5.5 6.5 L8 3 L8 11" fill="none" stroke="#1e2030" stroke-width="1.8"/><path d="M14 3 L14 10 M11 7.5 L14 10.5 L17 7.5" fill="none" stroke="#1e2030" stroke-width="1.8"/></svg>
<i style="left:82px;top:1284px;color:#c8d3f5">footer.md</i>
<svg style="position:absolute;left:51px;top:1322px" width="21" height="14" viewBox="0 0 21 14"><rect x="0" y="0" width="21" height="14" rx="2" fill="#c8d3f5"/><path d="M3 11 L3 3 L5.5 6.5 L8 3 L8 11" fill="none" stroke="#1e2030" stroke-width="1.8"/><path d="M14 3 L14 10 M11 7.5 L14 10.5 L17 7.5" fill="none" stroke="#1e2030" stroke-width="1.8"/></svg>
<i style="left:82px;top:1314px;color:#c8d3f5">index.md</i>
<svg style="position:absolute;left:51px;top:1350px" width="19" height="19" viewBox="0 0 19 19"><rect x="0" y="0" width="19" height="19" fill="#2fb6cf"/><text x="10" y="17" font-family="Liberation Sans" font-size="10" fill="#1e2030" text-anchor="middle">TS</text></svg>
<i style="left:82px;top:1344px;color:#c8d3f5">main.ts</i>
<svg style="position:absolute;left:51px;top:1382px" width="21" height="14" viewBox="0 0 21 14"><rect x="0" y="0" width="21" height="14" rx="2" fill="#c8d3f5"/><path d="M3 11 L3 3 L5.5 6.5 L8 3 L8 11" fill="none" stroke="#1e2030" stroke-width="1.8"/><path d="M14 3 L14 10 M11 7.5 L14 10.5 L17 7.5" fill="none" stroke="#1e2030" stroke-width="1.8"/></svg>
<i style="left:82px;top:1374px;color:#c8d3f5">nav.md</i>
<b style="left:727px;top:1403px;width:704px;height:30px;background:#2f334d"></b>
<i style="left:652px;top:954px;color:#3b4261">11</i>
<i style="left:652px;top:984px;color:#3b4261">10</i>
<i style="left:667px;top:1014px;color:#3b4261">9</i>
<i style="left:667px;top:1044px;color:#3b4261">8</i>
<i style="left:667px;top:1074px;color:#3b4261">7</i>
<i style="left:667px;top:1104px;color:#3b4261">6</i>
<i style="left:667px;top:1164px;color:#3b4261">5</i>
<i style="left:667px;top:1194px;color:#3b4261">4</i>
<i style="left:667px;top:1254px;color:#3b4261">3</i>
<i style="left:667px;top:1314px;color:#3b4261">2</i>
<i style="left:667px;top:1344px;color:#3b4261">1</i>
<i style="left:667px;top:1434px;color:#3b4261">1</i>
<i style="left:667px;top:1494px;color:#3b4261">2</i>
<i style="left:667px;top:1554px;color:#3b4261">3</i>
<i style="left:667px;top:1584px;color:#3b4261">4</i>
<i style="left:667px;top:1614px;color:#3b4261">5</i>
<i style="left:667px;top:1644px;color:#3b4261">6</i>
<i style="left:667px;top:1674px;color:#3b4261">7</i>
<i style="left:652px;top:1404px;color:#ff966c;font-weight:bold">12</i>
<b style="left:727px;top:955px;width:315px;height:28px;background:#2a2f4a"></b>
<i style="left:727px;top:954px;color:#82aaff;font-weight:bold"># My Personal Website</i>
<svg style="position:absolute;left:727px;top:1015px" width="27" height="28" viewBox="0 0 27 28"><g stroke="#f6c232" stroke-linecap="round" fill="none"><path d="M10.5 15 L3.5 8" stroke-width="4.6"/><path d="M13 12 L7 3.5" stroke-width="4.6"/><path d="M16.5 11 L12 2.5" stroke-width="4.6"/><path d="M19.5 12 L16.5 4.5" stroke-width="4.4"/><path d="M21.5 17 L23.5 9" stroke-width="4.4"/></g><ellipse cx="15.5" cy="18.5" rx="7.5" ry="8.5" transform="rotate(-28 15.5 18.5)" fill="#f6c232"/><path d="M18 1.5 L22 5.5 M20 0.8 L23.5 4" stroke="#b8b8c0" stroke-width="1"/><path d="M1 18 L4.5 22 M0.5 20.5 L3.5 24" stroke="#b8b8c0" stroke-width="1"/></svg>
<i style="left:772px;top:1014px;color:#c8d3f5">Glad you found me!</i>
<i style="left:727px;top:1074px;color:#c8d3f5">This is made with:</i>
<i style="left:727px;top:1104px;color:#65bcff">deno-quickblog</i>
<svg style="position:absolute;left:727px;top:1127px" width="60" height="6" viewBox="0 0 60 6"><path d="M0 3 Q2.5 0.2 5 3 Q7.5 5.8 10 3 Q12.5 0.2 15 3 Q17.5 5.8 20 3 Q22.5 0.2 25 3 Q27.5 5.8 30 3 Q32.5 0.2 35 3 Q37.5 5.8 40 3 Q42.5 0.2 45 3 Q47.5 5.8 50 3 Q52.5 0.2 55 3 Q57.5 5.8 60 3" fill="none" stroke="#c43e55" stroke-width="1.5"/></svg>
<svg style="position:absolute;left:802px;top:1127px" width="135" height="6" viewBox="0 0 135 6"><path d="M0 3 Q2.5 0.2 5 3 Q7.5 5.8 10 3 Q12.5 0.2 15 3 Q17.5 5.8 20 3 Q22.5 0.2 25 3 Q27.5 5.8 30 3 Q32.5 0.2 35 3 Q37.5 5.8 40 3 Q42.5 0.2 45 3 Q47.5 5.8 50 3 Q52.5 0.2 55 3 Q57.5 5.8 60 3 Q62.5 0.2 65 3 Q67.5 5.8 70 3 Q72.5 0.2 75 3 Q77.5 5.8 80 3 Q82.5 0.2 85 3 Q87.5 5.8 90 3 Q92.5 0.2 95 3 Q97.5 5.8 100 3 Q102.5 0.2 105 3 Q107.5 5.8 110 3 Q112.5 0.2 115 3 Q117.5 5.8 120 3 Q122.5 0.2 125 3 Q127.5 5.8 130 3 Q132.5 0.2 135 3 Q137.5 5.8 140 3" fill="none" stroke="#c43e55" stroke-width="1.5"/></svg>
<i style="left:727px;top:1134px;color:#c8d3f5">.</i>
<i style="left:727px;top:1194px;color:#65bcff">deno-quickblog</i>
<svg style="position:absolute;left:727px;top:1217px" width="60" height="6" viewBox="0 0 60 6"><path d="M0 3 Q2.5 0.2 5 3 Q7.5 5.8 10 3 Q12.5 0.2 15 3 Q17.5 5.8 20 3 Q22.5 0.2 25 3 Q27.5 5.8 30 3 Q32.5 0.2 35 3 Q37.5 5.8 40 3 Q42.5 0.2 45 3 Q47.5 5.8 50 3 Q52.5 0.2 55 3 Q57.5 5.8 60 3" fill="none" stroke="#c43e55" stroke-width="1.5"/></svg>
<svg style="position:absolute;left:802px;top:1217px" width="135" height="6" viewBox="0 0 135 6"><path d="M0 3 Q2.5 0.2 5 3 Q7.5 5.8 10 3 Q12.5 0.2 15 3 Q17.5 5.8 20 3 Q22.5 0.2 25 3 Q27.5 5.8 30 3 Q32.5 0.2 35 3 Q37.5 5.8 40 3 Q42.5 0.2 45 3 Q47.5 5.8 50 3 Q52.5 0.2 55 3 Q57.5 5.8 60 3 Q62.5 0.2 65 3 Q67.5 5.8 70 3 Q72.5 0.2 75 3 Q77.5 5.8 80 3 Q82.5 0.2 85 3 Q87.5 5.8 90 3 Q92.5 0.2 95 3 Q97.5 5.8 100 3 Q102.5 0.2 105 3 Q107.5 5.8 110 3 Q112.5 0.2 115 3 Q117.5 5.8 120 3 Q122.5 0.2 125 3 Q127.5 5.8 130 3 Q132.5 0.2 135 3 Q137.5 5.8 140 3" fill="none" stroke="#c43e55" stroke-width="1.5"/></svg>
<i style="left:727px;top:1224px;color:#c8d3f5"> is a tiny</i>
<i style="left:727px;top:1254px;color:#c8d3f5">static site generator I spun up for bits and</i>
<i style="left:727px;top:1284px;color:#c8d3f5">giggles.</i>
<i style="left:727px;top:1344px;color:#c8d3f5">A GitHub Action auto-builds this project and</i>
<i style="left:727px;top:1374px;color:#c8d3f5">then hosts it on GitHub Deploy.</i>
<b style="left:727px;top:1403px;width:15px;height:30px;background:#f2d5c8"></b>
<i style="left:727px;top:1434px;color:#c8d3f5">As a bonus </i>
<i style="left:892px;top:1434px;color:#65bcff">deno-starshower</i>
<svg style="position:absolute;left:892px;top:1457px" width="60" height="6" viewBox="0 0 60 6"><path d="M0 3 Q2.5 0.2 5 3 Q7.5 5.8 10 3 Q12.5 0.2 15 3 Q17.5 5.8 20 3 Q22.5 0.2 25 3 Q27.5 5.8 30 3 Q32.5 0.2 35 3 Q37.5 5.8 40 3 Q42.5 0.2 45 3 Q47.5 5.8 50 3 Q52.5 0.2 55 3 Q57.5 5.8 60 3" fill="none" stroke="#c43e55" stroke-width="1.5"/></svg>
<svg style="position:absolute;left:967px;top:1457px" width="150" height="6" viewBox="0 0 150 6"><path d="M0 3 Q2.5 0.2 5 3 Q7.5 5.8 10 3 Q12.5 0.2 15 3 Q17.5 5.8 20 3 Q22.5 0.2 25 3 Q27.5 5.8 30 3 Q32.5 0.2 35 3 Q37.5 5.8 40 3 Q42.5 0.2 45 3 Q47.5 5.8 50 3 Q52.5 0.2 55 3 Q57.5 5.8 60 3 Q62.5 0.2 65 3 Q67.5 5.8 70 3 Q72.5 0.2 75 3 Q77.5 5.8 80 3 Q82.5 0.2 85 3 Q87.5 5.8 90 3 Q92.5 0.2 95 3 Q97.5 5.8 100 3 Q102.5 0.2 105 3 Q107.5 5.8 110 3 Q112.5 0.2 115 3 Q117.5 5.8 120 3 Q122.5 0.2 125 3 Q127.5 5.8 130 3 Q132.5 0.2 135 3 Q137.5 5.8 140 3 Q142.5 0.2 145 3 Q147.5 5.8 150 3" fill="none" stroke="#c43e55" stroke-width="1.5"/></svg>
<i style="left:727px;top:1464px;color:#c8d3f5"> is</i>
<i style="left:727px;top:1494px;color:#c8d3f5">integrated. Again, run periodically in a</i>
<i style="left:727px;top:1524px;color:#c8d3f5">GitHub Actions, updating the blog</i>
<i style="left:727px;top:1554px;color:#c8d3f5">content automagically.</i>
<b style="left:729px;top:1627px;width:40px;height:2px;background:#ff966c"></b>
<i style="left:727px;top:1674px;color:#c8d3f5">It is not much, but it is honest work</i>
<svg style="position:absolute;left:1298px;top:1675px" width="28" height="28" viewBox="0 0 28 28"><path d="M3 26 Q3 20 12 20 Q21 20 21 26 Z" fill="#5cb84a"/><path d="M7 21 L7.5 26 M17 21 L16.5 26" stroke="#3a78d0" stroke-width="2"/><rect x="3" y="25" width="18" height="2" fill="#2e6cc8"/><path d="M5 13 Q5 6 12 6 Q19 6 19 13 Q19 19 12 19.5 Q5 19 5 13 Z" fill="#7a5a3a"/><ellipse cx="12" cy="14" rx="6" ry="6.2" fill="#f8c42e"/><circle cx="9.8" cy="13" r="0.9" fill="#4a3010"/><circle cx="14.2" cy="13" r="0.9" fill="#4a3010"/><path d="M1.5 9 Q12 4 22 9 Q20 7 17 6.5 Q16 2 12 2 Q8 2 7 6.5 Q4 7 1.5 9 Z" fill="#e8e060"/><path d="M22 7 L22 26 M20.2 7 L20.2 13 Q20.2 15 22 15 Q23.8 15 23.8 13 L23.8 7" stroke="#a8a8b0" stroke-width="1.1" fill="none"/></svg>
<svg style="position:absolute;left:1342px;top:1675px" width="28" height="28" viewBox="0 0 28 28"><rect x="1" y="12" width="4" height="10" rx="1" fill="#d04848"/><rect x="23" y="12" width="4" height="10" rx="1" fill="#d04848"/><rect x="4" y="9" width="20" height="17" rx="2" fill="#a8b8bc"/><circle cx="9.5" cy="15.5" r="2.4" fill="#f4f8ff"/><circle cx="18.5" cy="15.5" r="2.4" fill="#f4f8ff"/><circle cx="14" cy="19" r="1.2" fill="#d04050"/><path d="M8 22 L20 22" stroke="#e8eef0" stroke-width="1.4" stroke-dasharray="1.5 0.8"/><path d="M14 9 L14 4" stroke="#8898a0" stroke-width="1.5"/><circle cx="14" cy="3.5" r="1.8" fill="none" stroke="#8898a0" stroke-width="1.3"/></svg>
<b style="left:0px;top:1763px;width:1431px;height:30px;background:#1e2030"></b>
<b style="left:7px;top:1763px;width:120px;height:30px;background:#82aaff"></b>
<b style="left:127px;top:1763px;width:0;height:0;border-top:15px solid transparent;border-bottom:15px solid transparent;border-left:15px solid #82aaff"></b>
<i style="left:22px;top:1764px;color:#1e2030">NORMAL</i>
<b style="left:142px;top:1763px;width:210px;height:30px;background:#3b4261"></b>
<b style="left:127px;top:1763px;width:15px;height:30px;background:#3b4261"></b>
<b style="left:127px;top:1763px;width:0;height:0;border-top:15px solid transparent;border-bottom:15px solid transparent;border-left:15px solid #82aaff"></b>
<b style="left:352px;top:1763px;width:0;height:0;border-top:15px solid transparent;border-bottom:15px solid transparent;border-left:15px solid #3b4261"></b>
<svg style="position:absolute;left:159px;top:1766px" width="14" height="26" viewBox="0 0 14 26"><path d="M3 25 L3 16 Q3 12 7 10 L10 8 L10 2 M7 5 L10 2 L13 5 M3 2 L3 9" fill="none" stroke="#82aaff" stroke-width="2.4"/></svg>
<i style="left:187px;top:1764px;color:#82aaff">fish-shell</i>
<svg style="position:absolute;left:379px;top:1764px" width="27" height="27" viewBox="0 0 27 27"><g fill="none" stroke="#ffc777" stroke-width="3" stroke-linecap="round" stroke-linejoin="round"><path d="M21 8.1 L6 8.1 Q2.6 8.1 2.6 5.4 Q2.6 2.7 6 2.7 L21 2.7 Q24.2 2.7 24.2 6 Q24.2 7.5 23 9.5 L17.6 21.5"/><path d="M8.3 9.3 L3.2 21.5 Q2.6 25.1 6.2 25.1 L22 25.1 Q25.3 25.1 25.3 21.6 Q25.3 18.2 22.2 18.2 Q19.3 18.2 18.6 21.5"/></g><path d="M9.2 13.8 L16.7 13.8 M6.6 18.3 L14 18.3" stroke="#ffc777" stroke-width="2.6" stroke-linecap="round"/></svg>
<i style="left:427px;top:1764px;color:#c8d3f5;font-weight:bold">README.md</i>
<svg style="position:absolute;left:1010px;top:1764px" width="26" height="27" viewBox="0 0 26 27"><path d="M13 2 L23.5 7.5 L23.5 19 L13 24.5 L2.5 19 L2.5 7.5 Z M2.5 7.5 L13 13 L23.5 7.5 M13 13 L13 24.5" fill="none" stroke="#65bcff" stroke-width="2.6" stroke-linejoin="round"/></svg>
<i style="left:1042px;top:1764px;color:#65bcff">16</i>
<b style="left:1102px;top:1763px;width:195px;height:30px;background:#3b4261"></b>
<b style="left:1087px;top:1763px;width:0;height:0;border-top:15px solid transparent;border-bottom:15px solid transparent;border-right:15px solid #3b4261"></b>
<i style="left:1117px;top:1764px;color:#82aaff">63%</i>
<i style="left:1192px;top:1764px;color:#82aaff">12:1</i>
<b style="left:1297px;top:1763px;width:134px;height:30px;background:#82aaff"></b>
<b style="left:1282px;top:1763px;width:0;height:0;border-top:15px solid transparent;border-bottom:15px solid transparent;border-right:15px solid #82aaff"></b>
<svg style="position:absolute;left:1309px;top:1765px" width="26" height="26" viewBox="0 0 26 26"><circle cx="13" cy="13" r="10.5" fill="none" stroke="#1e2030" stroke-width="2.4"/><path d="M12 7 L12 13.5 L16 16" fill="none" stroke="#1e2030" stroke-width="2.2"/></svg>
<i style="left:1342px;top:1764px;color:#1e2030">14:21</i>
<i style="left:1433px;top:954px;color:#82aaff">Watcher</i>
<i style="left:1553px;top:954px;color:#9da0b0">Restarting! File change detected: "/run/host/var/home/simon/Code/simonneutert.github.io/</i>
<i style="left:1433px;top:984px;color:#9da0b0">posts/2026-02-08-fish-without-sacrifice.md"</i>
<i style="left:1433px;top:1014px;color:#c8d3f5">/run/host/var/home/simon/Code/simonneutert.github.io/posts/2026-02-08-fish-without-sacrifice.md</i>
<i style="left:1433px;top:1044px;color:#c8d3f5">Checked 1 file</i>
<i style="left:1433px;top:1074px;color:#82aaff">Watcher</i>
<i style="left:1553px;top:1074px;color:#c8d3f5">Fmt finished. Restarting on file change...</i>
<svg style="position:absolute;left:20px;top:9px" width="36" height="36" viewBox="0 0 36 36"><defs><radialGradient id="lg" cx="0.4" cy="0.4" r="0.7"><stop offset="0" stop-color="#4a3ae0"/><stop offset="1" stop-color="#9a2ad8"/></radialGradient></defs><circle cx="19" cy="19" r="15" fill="url(#lg)"/><path d="M4 10 L21 10 M12 3 L12 22 Q12 30 20 30 Q29 30 29 22 Q29 15 20 15 L12 15" fill="none" stroke="#f0e8ff" stroke-width="3.2" stroke-linecap="round"/></svg>
<b style="left:103px;top:3px;width:42px;height:45px;border-radius:7px;background:rgba(150,180,240,0.55)"></b>
<i style="left:116px;top:14px;color:#ffffff;font-family:'Liberation Sans',sans-serif;font-size:25px;line-height:25px;font-weight:bold">1</i>
<i style="left:171px;top:14px;color:rgba(200,212,240,0.85);font-family:'Liberation Sans',sans-serif;font-size:25px;line-height:25px;font-weight:bold">2</i>
<i style="left:226px;top:14px;color:rgba(200,212,240,0.85);font-family:'Liberation Sans',sans-serif;font-size:25px;line-height:25px;font-weight:bold">3</i>
<i style="left:281px;top:14px;color:rgba(200,212,240,0.85);font-family:'Liberation Sans',sans-serif;font-size:25px;line-height:25px;font-weight:bold">4</i>
<i style="left:1345px;top:14px;color:#ffffff;font-family:'Liberation Sans',sans-serif;font-size:24px;line-height:24px;font-weight:bold">So, 8. Feb  14:21</i>
<i style="left:2636px;top:14px;color:#f2f2f2;font-family:'Liberation Sans',sans-serif;font-size:25px;line-height:25px;font-weight:bold">en</i>
<svg style="position:absolute;left:2681px;top:14px" width="28" height="24" viewBox="0 0 28 24"><path d="M2 9 Q14 -1 26 9" fill="none" stroke="#f0f0f0" stroke-width="3" stroke-linecap="round"/><path d="M6.5 13 Q14 6 21.5 13" fill="none" stroke="#f0f0f0" stroke-width="3" stroke-linecap="round"/><path d="M11 17 Q14 14.5 17 17" fill="none" stroke="#f0f0f0" stroke-width="3" stroke-linecap="round"/><circle cx="14" cy="21" r="2.5" fill="#f0f0f0"/></svg>
<svg style="position:absolute;left:2728px;top:14px" width="28" height="26" viewBox="0 0 28 26"><path d="M1 8 L6 8 L12 2 L12 24 L6 18 L1 18 Z" fill="#f0f0f0"/><path d="M16 8 Q19 13 16 18" fill="none" stroke="#f0f0f0" stroke-width="2.6" stroke-linecap="round"/><path d="M20 4 Q26 13 20 22" fill="none" stroke="rgba(240,240,240,0.45)" stroke-width="2.6" stroke-linecap="round"/></svg>
<svg style="position:absolute;left:2776px;top:11px" width="28" height="32" viewBox="0 0 28 32"><rect x="2" y="5.3" width="20.3" height="24" rx="4.5" fill="#f4f6fa"/><rect x="8.8" y="1.9" width="7.2" height="4.5" rx="1.2" fill="#f4f6fa"/><rect x="6.2" y="9.2" width="11.8" height="16.2" rx="1.2" fill="none" stroke="#4e5e6c" stroke-width="1.3"/><path d="M21.5 15.5 L13.5 24 L18 24 L15 30 L26 20.5 L21.5 20.5 L24.5 15.5 Z" fill="#f4f6fa" stroke="#4e5e6c" stroke-width="1.4" stroke-linejoin="round"/></svg>
<i style="left:2809px;top:14px;color:#f2f2f2;font-family:'Liberation Sans',sans-serif;font-size:25px;line-height:25px;font-weight:bold">100 %</i>
<svg style="position:absolute;left:12px;top:61px" width="14" height="24" viewBox="0 0 14 24"><path d="M2 2 L11 12 L2 22" fill="none" stroke="#ffffff" stroke-width="2.6" stroke-linejoin="miter"/></svg>
<i style="left:36px;top:59px;color:#ffffff;font-family:'Liberation Sans',sans-serif;font-size:28px;line-height:28px;font-weight:bold">nvim . /v/h/s/C/simonneutert.github.io</i>
<b style="left:2770px;top:83px;width:19px;height:4px;background:#f0f0f0"></b>
<svg style="position:absolute;left:2807px;top:64px" width="27" height="24" viewBox="0 0 27 24"><rect x="1.5" y="7.5" width="16" height="15" fill="none" stroke="#f0f0f0" stroke-width="2"/><path d="M6.5 7.5 L6.5 1.5 L25 1.5 L25 16 L17.5 16" fill="none" stroke="#f0f0f0" stroke-width="2"/></svg>
<svg style="position:absolute;left:2847px;top:65px" width="26" height="25" viewBox="0 0 26 25"><path d="M2 2 L24 23 M24 2 L2 23" stroke="#f0f0f0" stroke-width="3"/></svg>
</body></html>
